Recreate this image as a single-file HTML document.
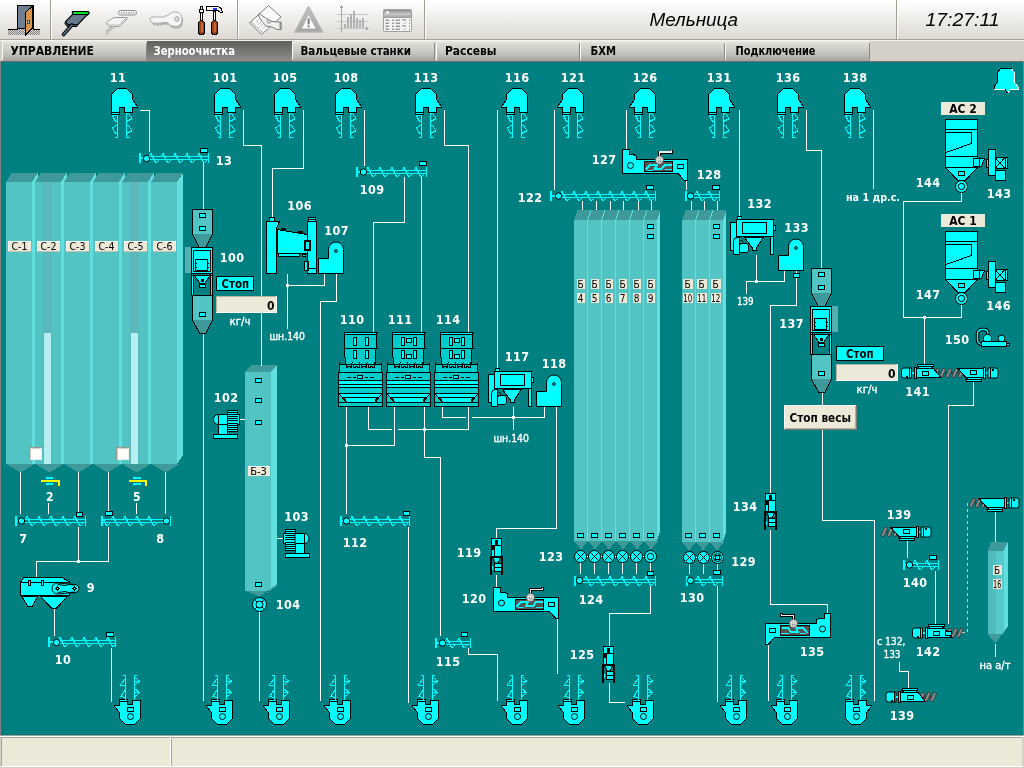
<!DOCTYPE html>
<html lang="ru"><head><meta charset="utf-8"><title>Мельница</title>
<style>
html,body{margin:0;padding:0;width:1024px;height:768px;overflow:hidden;background:#d4d0c8}
svg{display:block;position:absolute;left:0;top:0;will-change:transform}
text{white-space:pre}
</style></head><body>
<svg width="1024" height="768" viewBox="0 0 1024 768">
<defs>
<linearGradient id="gTool" x1="0" y1="0" x2="0" y2="1"><stop offset="0" stop-color="#ffffff"/><stop offset="0.5" stop-color="#eeece8"/><stop offset="1" stop-color="#dcd9d3"/></linearGradient>
<linearGradient id="gTab" x1="0" y1="0" x2="0" y2="1"><stop offset="0" stop-color="#ebeae3"/><stop offset="0.15" stop-color="#dbdad3"/><stop offset="0.6" stop-color="#c6c5bf"/><stop offset="1" stop-color="#a4a3a0"/></linearGradient>
<linearGradient id="gTabA" x1="0" y1="0" x2="0" y2="1"><stop offset="0" stop-color="#62605c"/><stop offset="1" stop-color="#8e8e8c"/></linearGradient>
<linearGradient id="gWarn" x1="0" y1="0" x2="0" y2="1"><stop offset="0" stop-color="#c4c4c4"/><stop offset="1" stop-color="#a4a4a4"/></linearGradient>
<linearGradient id="gTbl" x1="0" y1="0" x2="0" y2="1"><stop offset="0" stop-color="#909090"/><stop offset="0.5" stop-color="#c8c8c8"/><stop offset="1" stop-color="#9a9a9a"/></linearGradient>
<pattern id="dots" width="2" height="2" patternUnits="userSpaceOnUse"><rect width="2" height="2" fill="#d8d8d8"/><rect width="1" height="1" fill="#808080"/><rect x="1" y="1" width="1" height="1" fill="#808080"/></pattern>
<pattern id="ball" width="2" height="2" patternUnits="userSpaceOnUse"><rect width="2" height="2" fill="#b0b0b0"/><rect width="1" height="1" fill="#ffffff"/><rect x="1" y="1" width="1" height="1" fill="#787878"/></pattern>
</defs>
<g shape-rendering="crispEdges">
<rect x="0" y="0" width="1024" height="40" fill="url(#gTool)" stroke="none" stroke-width="1" />
<rect x="0" y="39" width="1024" height="1" fill="#a8a49c" stroke="none" stroke-width="1" />
<rect x="0" y="40" width="1024" height="1" fill="#f4f3ee" stroke="none" stroke-width="1" />
<rect x="50" y="0" width="1" height="39" fill="#a09c94" stroke="none" stroke-width="1" />
<rect x="51" y="0" width="1" height="39" fill="#ffffff" stroke="none" stroke-width="1" />
<rect x="237" y="0" width="1" height="39" fill="#a09c94" stroke="none" stroke-width="1" />
<rect x="238" y="0" width="1" height="39" fill="#ffffff" stroke="none" stroke-width="1" />
<rect x="424" y="0" width="1" height="39" fill="#a09c94" stroke="none" stroke-width="1" />
<rect x="425" y="0" width="1" height="39" fill="#ffffff" stroke="none" stroke-width="1" />
<rect x="896" y="0" width="1" height="39" fill="#a09c94" stroke="none" stroke-width="1" />
<rect x="897" y="0" width="1" height="39" fill="#ffffff" stroke="none" stroke-width="1" />
<rect x="0" y="41" width="1024" height="20" fill="#d4d0c8" stroke="none" stroke-width="1" />
<rect x="2" y="41" width="145" height="20" fill="url(#gTab)" stroke="none" stroke-width="1" />
<rect x="2" y="42" width="1" height="18" fill="#f8f8f4" stroke="none" stroke-width="1" />
<rect x="146" y="43" width="1" height="17" fill="#8a8884" stroke="none" stroke-width="1" />
<rect x="147" y="41" width="145" height="20" fill="url(#gTabA)" stroke="none" stroke-width="1" />
<rect x="292" y="41" width="143" height="20" fill="url(#gTab)" stroke="none" stroke-width="1" />
<rect x="292" y="42" width="1" height="18" fill="#f8f8f4" stroke="none" stroke-width="1" />
<rect x="434" y="43" width="1" height="17" fill="#8a8884" stroke="none" stroke-width="1" />
<rect x="436" y="41" width="144" height="20" fill="url(#gTab)" stroke="none" stroke-width="1" />
<rect x="436" y="42" width="1" height="18" fill="#f8f8f4" stroke="none" stroke-width="1" />
<rect x="579" y="43" width="1" height="17" fill="#8a8884" stroke="none" stroke-width="1" />
<rect x="580" y="41" width="145" height="20" fill="url(#gTab)" stroke="none" stroke-width="1" />
<rect x="580" y="42" width="1" height="18" fill="#f8f8f4" stroke="none" stroke-width="1" />
<rect x="724" y="43" width="1" height="17" fill="#8a8884" stroke="none" stroke-width="1" />
<rect x="725" y="41" width="145" height="20" fill="url(#gTab)" stroke="none" stroke-width="1" />
<rect x="725" y="42" width="1" height="18" fill="#f8f8f4" stroke="none" stroke-width="1" />
<rect x="869" y="43" width="1" height="17" fill="#8a8884" stroke="none" stroke-width="1" />
<rect x="0" y="61" width="1024" height="1" fill="#7a7270" stroke="none" stroke-width="1" />
<rect x="0" y="61" width="1024" height="675" fill="#808080" stroke="none" stroke-width="1" />
<rect x="1" y="62" width="1022" height="673" fill="#008080" stroke="none" stroke-width="1" />
<rect x="1" y="61" width="1022" height="1" fill="#75696a" stroke="none" stroke-width="1" />
<rect x="0" y="735" width="1024" height="33" fill="#d4d0c8" stroke="none" stroke-width="1" />
<rect x="0" y="735" width="1024" height="1" fill="#a0a09a" stroke="none" stroke-width="1" />
<rect x="0" y="736" width="1024" height="1" fill="#ffffff" stroke="none" stroke-width="1" />
<rect x="2" y="738" width="168" height="28" fill="#ece9d8" stroke="none" stroke-width="1" />
<rect x="172" y="738" width="850" height="28" fill="#ece9d8" stroke="none" stroke-width="1" />
<rect x="2" y="737" width="168" height="1" fill="#a8a498" stroke="none" stroke-width="1" />
<rect x="172" y="737" width="850" height="1" fill="#a8a498" stroke="none" stroke-width="1" />
<rect x="1" y="737" width="1" height="29" fill="#a8a498" stroke="none" stroke-width="1" />
<rect x="171" y="737" width="1" height="29" fill="#a8a498" stroke="none" stroke-width="1" />
<rect x="170" y="737" width="1" height="29" fill="#ffffff" stroke="none" stroke-width="1" />
<rect x="1" y="766" width="1022" height="1" fill="#ffffff" stroke="none" stroke-width="1" />
</g>
<text x="10.5" y="55" font-family="DejaVu Sans Condensed, DejaVu Sans, Liberation Sans, sans-serif" font-size="12" fill="#000" font-weight="bold" text-anchor="start" textLength="83.5" lengthAdjust="spacingAndGlyphs" >УПРАВЛЕНИЕ</text>
<text x="153.5" y="55" font-family="DejaVu Sans Condensed, DejaVu Sans, Liberation Sans, sans-serif" font-size="12" fill="#fff" font-weight="bold" text-anchor="start" textLength="81.5" lengthAdjust="spacingAndGlyphs" >Зерноочистка</text>
<text x="300.5" y="55" font-family="DejaVu Sans Condensed, DejaVu Sans, Liberation Sans, sans-serif" font-size="12" fill="#000" font-weight="bold" text-anchor="start" textLength="110.5" lengthAdjust="spacingAndGlyphs" >Вальцевые станки</text>
<text x="445" y="55" font-family="DejaVu Sans Condensed, DejaVu Sans, Liberation Sans, sans-serif" font-size="12" fill="#000" font-weight="bold" text-anchor="start" textLength="51.5" lengthAdjust="spacingAndGlyphs" >Рассевы</text>
<text x="590.5" y="55" font-family="DejaVu Sans Condensed, DejaVu Sans, Liberation Sans, sans-serif" font-size="12" fill="#000" font-weight="bold" text-anchor="start" textLength="25.5" lengthAdjust="spacingAndGlyphs" >БХМ</text>
<text x="735.5" y="55" font-family="DejaVu Sans Condensed, DejaVu Sans, Liberation Sans, sans-serif" font-size="12" fill="#000" font-weight="bold" text-anchor="start" textLength="80" lengthAdjust="spacingAndGlyphs" >Подключение</text>
<text x="649.5" y="26" font-family="Liberation Sans, Arial, sans-serif" font-size="17.5" fill="#000" font-style="italic" text-anchor="start" textLength="88.5" lengthAdjust="spacingAndGlyphs" >Мельница</text>
<text x="925.5" y="26" font-family="Liberation Sans, Arial, sans-serif" font-size="17.5" fill="#000" font-style="italic" text-anchor="start" textLength="74" lengthAdjust="spacingAndGlyphs" >17:27:11</text>
<g shape-rendering="crispEdges">
<rect x="8" y="29" width="32" height="6" fill="url(#dots)" stroke="none" stroke-width="1" />
<polygon points="17.5,28.5 17.5,5.5 33,5.5 33,28.5" fill="#708090" stroke="#000" stroke-width="1" />
<rect x="17" y="28" width="16" height="1" fill="#000" stroke="none" stroke-width="1" />
<polygon points="25.5,12.5 32.5,6 32.5,28 25.5,35" fill="#d8924a" stroke="#000" stroke-width="1" />
<rect x="27" y="20" width="2" height="3.5" fill="#9fd8e8" stroke="#000" stroke-width="0.6" />
<rect x="8" y="28.5" width="9.5" height="1" fill="#000" stroke="none" stroke-width="1" />
<rect x="33" y="28.5" width="7" height="1" fill="#000" stroke="none" stroke-width="1" />
</g><g shape-rendering="geometricPrecision">
<path d="M72.5 11.5H87Q89.5 11.5 89 13.5L87.5 15H72.5Z" fill="#00e428" stroke="#000" stroke-width="1.2"/>
<path d="M72.5 14.5H87.5L78 24.5H67.5L65.5 21.5Z" fill="#66788e" stroke="#000" stroke-width="1.1"/>
<path d="M65.5 21.5L67.5 24.5H78L77 26.5H67L65 23.5Z" fill="#4c5c70" stroke="#000" stroke-width="1"/>
<path d="M72 25L63.5 34.5" stroke="#000" stroke-width="3.6" stroke-linecap="round" fill="none"/>
<path d="M72 25L63.5 34.5" stroke="#66788e" stroke-width="1.6" stroke-linecap="round" fill="none"/>
<rect x="118.5" y="10.5" width="18" height="4.5" rx="2" fill="#f6f6f6" stroke="#8c8c8c" stroke-width="1"/>
<path d="M121 12.8H135" stroke="#808080" stroke-width="1.2" stroke-dasharray="1.2 1.2" fill="none"/>
<path d="M114 17.5H126.5Q128 17.5 127 19L119.5 26.5H109L106.5 24Q106 22.5 107.5 21.5Z" fill="#f4f4f2" stroke="#9c9c9c" stroke-width="1"/>
<path d="M108 23L110 25H119L126 18.5" stroke="#b8b8b8" stroke-width="1" fill="none"/>
<path d="M113.5 26.5L107.5 31L106.5 34.5" stroke="#9c9c9c" stroke-width="2.6" fill="none"/>
<path d="M113.5 26.5L107.5 31L106.5 34.5" stroke="#f4f4f2" stroke-width="1" fill="none"/>
<path d="M150 20Q149 17 152 17L164.5 17L165.5 15.5L167.5 16Q170.5 11.5 176 12Q182.5 13 182 19.5Q181.5 26.5 175 26.5Q170 26.5 167.5 22.5L161 22.5L160 24L158.5 22.5L156.5 24L155 22.5L153 23.5Z" fill="#b4b4b4" transform="translate(1.2,2.2)"/>
<path d="M150 20Q149 17 152 17L164.5 17L165.5 15.5L167.5 16Q170.5 11.5 176 12Q182.5 13 182 19.5Q181.5 26.5 175 26.5Q170 26.5 167.5 22.5L161 22.5L160 24L158.5 22.5L156.5 24L155 22.5L153 23.5Z" fill="#f6f6f6" stroke="#a8a8a8" stroke-width="0.9"/>
<circle cx="177" cy="19" r="2.3" fill="#dcdcdc" stroke="#9c9c9c" stroke-width="0.9"/>
</g>
<g shape-rendering="crispEdges">
<rect x="200.5" y="6" width="2" height="16" fill="#f0f0f0" stroke="#000" stroke-width="1" />
<rect x="199.5" y="9" width="4" height="3" fill="#f0f0f0" stroke="#000" stroke-width="1" />
<rect x="198.5" y="20.5" width="6" height="14" fill="#984216" stroke="#000" stroke-width="1" rx="3"/>
<rect x="200.5" y="23" width="2" height="9" fill="#c4683a" stroke="none" stroke-width="1" />
<rect x="213.5" y="11" width="2" height="12" fill="#f0f0f0" stroke="#000" stroke-width="1" />
<polygon points="206.5,7 208,6 218,6 221.5,9 222.5,12.5 220.5,12.5 218,10.5 208,10.5 206.5,10.5" fill="#f4f4f4" stroke="#000" stroke-width="1" />
<rect x="213" y="8" width="4" height="1.5" fill="#2030ff" stroke="none" stroke-width="1" />
<rect x="211.5" y="20.5" width="6" height="14" fill="#984216" stroke="#000" stroke-width="1" rx="3"/>
<rect x="213.5" y="23" width="2" height="9" fill="#c4683a" stroke="none" stroke-width="1" />
</g>
<g>
<polygon points="249.5,23 268.5,5.5 281,17 261.5,34.5" fill="#fafafa" stroke="#707070" stroke-width="0.9" />
<polyline points="251,22 263,33" fill="none" stroke="#909090" stroke-width="1.6" stroke-dasharray="1 1"/>
<polyline points="256,22 259,19.5" fill="none" stroke="#a0a0a0" stroke-width="0.8" />
<polyline points="258.2,24.2 261.2,21.7" fill="none" stroke="#a0a0a0" stroke-width="0.8" />
<polyline points="260.4,26.4 263.4,23.9" fill="none" stroke="#a0a0a0" stroke-width="0.8" />
<polyline points="262.6,28.6 265.6,26.1" fill="none" stroke="#a0a0a0" stroke-width="0.8" />
<polygon points="259,13.5 270,21 277,22 281,22 281,29.5 277,29.5 272,27 266,26 262,21.5 258.5,16" fill="#f0f0f0" stroke="#707070" stroke-width="0.9" />
<rect x="279.5" y="22" width="2" height="7.5" fill="#909090" stroke="none" stroke-width="1" />
<circle cx="269" cy="21.5" r="1.6" fill="#ffffff" stroke="#606060" stroke-width="0.8"  shape-rendering="geometricPrecision"/>
<polygon points="308.5,7 322.5,32 295,32" fill="url(#gWarn)" stroke="#b4b4b4" stroke-width="1.6" stroke-linejoin="round"/>
<polygon points="308.5,15.5 315.5,28.5 302,28.5" fill="#ffffff" stroke="none" stroke-width="1" />
<rect x="307.6" y="18.5" width="2" height="6" fill="#7a7a7a" stroke="none" stroke-width="1" />
<rect x="307.6" y="25.6" width="2" height="1.8" fill="#7a7a7a" stroke="none" stroke-width="1" />
<polyline points="337,14.5 368,14.5" fill="none" stroke="#c8c8c8" stroke-width="1" />
<polyline points="337,21.5 368,21.5" fill="none" stroke="#c8c8c8" stroke-width="1" />
<polyline points="337,28.5 368,28.5" fill="none" stroke="#c8c8c8" stroke-width="1" />
<polyline points="341.5,5.5 341.5,32.5" fill="none" stroke="#a8a8a8" stroke-width="1" />
<polygon points="339.8,8 341.5,5 343.2,8" fill="#9a9a9a" stroke="none" stroke-width="1" />
<polygon points="366,26.8 369,28.5 366,30.2" fill="#9a9a9a" stroke="none" stroke-width="1" />
<rect x="344" y="24" width="2" height="4" fill="#b2b2b2" stroke="none" stroke-width="1" />
<rect x="347" y="17" width="2" height="11" fill="#b2b2b2" stroke="none" stroke-width="1" />
<rect x="350" y="14" width="2" height="14" fill="#b2b2b2" stroke="none" stroke-width="1" />
<rect x="353" y="11" width="2" height="17" fill="#b2b2b2" stroke="none" stroke-width="1" />
<rect x="356" y="18" width="2" height="10" fill="#b2b2b2" stroke="none" stroke-width="1" />
<rect x="359" y="20" width="2" height="8" fill="#b2b2b2" stroke="none" stroke-width="1" />
<rect x="362" y="18" width="2" height="10" fill="#b2b2b2" stroke="none" stroke-width="1" />
<rect x="344" y="30" width="20" height="2.5" fill="#e4e4e4" stroke="none" stroke-width="1" />
<rect x="383.5" y="9.5" width="28" height="22" fill="#f4f4f4" stroke="#a0a0a0" stroke-width="1" rx="1"/>
<rect x="384" y="10" width="27" height="8" fill="url(#gTbl)" stroke="none" stroke-width="1" />
<circle cx="387.5" cy="12.5" r="1.4" fill="#ffffff" stroke="none" stroke-width="1"  shape-rendering="geometricPrecision"/>
<polyline points="385.5,20.2 389,20.2" fill="none" stroke="#707070" stroke-width="1" />
<polyline points="392,20.2 394,20.2" fill="none" stroke="#707070" stroke-width="1" />
<polyline points="395.5,20.2 400,20.2" fill="none" stroke="#707070" stroke-width="1" />
<polyline points="404.5,20.2 405.5,20.2" fill="none" stroke="#707070" stroke-width="1" />
<polyline points="409,20.2 410,20.2" fill="none" stroke="#707070" stroke-width="1" />
<polyline points="385.5,23.2 389,23.2" fill="none" stroke="#707070" stroke-width="1" />
<polyline points="392,23.2 394,23.2" fill="none" stroke="#707070" stroke-width="1" />
<polyline points="395.5,23.2 400,23.2" fill="none" stroke="#707070" stroke-width="1" />
<polyline points="404.5,23.2 405.5,23.2" fill="none" stroke="#707070" stroke-width="1" />
<polyline points="409,23.2 410,23.2" fill="none" stroke="#707070" stroke-width="1" />
<polyline points="385.5,26.2 389,26.2" fill="none" stroke="#707070" stroke-width="1" />
<polyline points="392,26.2 394,26.2" fill="none" stroke="#707070" stroke-width="1" />
<polyline points="395.5,26.2 400,26.2" fill="none" stroke="#707070" stroke-width="1" />
<polyline points="404.5,26.2 405.5,26.2" fill="none" stroke="#707070" stroke-width="1" />
<polyline points="409,26.2 410,26.2" fill="none" stroke="#707070" stroke-width="1" />
<polyline points="385.5,29.2 389,29.2" fill="none" stroke="#707070" stroke-width="1" />
<polyline points="392,29.2 394,29.2" fill="none" stroke="#707070" stroke-width="1" />
<polyline points="395.5,29.2 400,29.2" fill="none" stroke="#707070" stroke-width="1" />
<polyline points="404.5,29.2 405.5,29.2" fill="none" stroke="#707070" stroke-width="1" />
<polyline points="409,29.2 410,29.2" fill="none" stroke="#707070" stroke-width="1" />
<rect x="402" y="19" width="4" height="1.6" fill="#b0b0b0" stroke="none" stroke-width="1" />
<rect x="402" y="25" width="4" height="1.6" fill="#b0b0b0" stroke="none" stroke-width="1" />
</g>
<g shape-rendering="crispEdges">
<polygon points="32,182 37.5,173 37.5,455 32,464" fill="#62e0e0"/>
<polygon points="6,182 11.5,173 37.5,173 32,182" fill="#3e9a9a"/>
<polygon points="61,182 66.5,173 66.5,455 61,464" fill="#62e0e0"/>
<polygon points="35,182 40.5,173 66.5,173 61,182" fill="#3e9a9a"/>
<polygon points="90,182 95.5,173 95.5,455 90,464" fill="#62e0e0"/>
<polygon points="64,182 69.5,173 95.5,173 90,182" fill="#3e9a9a"/>
<polygon points="119,182 124.5,173 124.5,455 119,464" fill="#62e0e0"/>
<polygon points="93,182 98.5,173 124.5,173 119,182" fill="#3e9a9a"/>
<polygon points="148,182 153.5,173 153.5,455 148,464" fill="#62e0e0"/>
<polygon points="122,182 127.5,173 153.5,173 148,182" fill="#3e9a9a"/>
<polygon points="177,182 183,173 183,455 177,464" fill="#62e0e0"/>
<polygon points="151,182 156.5,173 182.5,173 177,182" fill="#3e9a9a"/>
<rect x="6" y="182" width="26" height="282" fill="#52c4c4"/>
<rect x="32" y="182" width="3" height="282" fill="#62e0e0"/>
<polygon points="6,464 35,464 20.5,472.5" fill="#3e9a9a"/>
<rect x="35" y="182" width="26" height="282" fill="#52c4c4"/>
<rect x="61" y="182" width="3" height="282" fill="#62e0e0"/>
<polygon points="35,464 64,464 49.5,472.5" fill="#3e9a9a"/>
<rect x="64" y="182" width="26" height="282" fill="#52c4c4"/>
<rect x="90" y="182" width="3" height="282" fill="#62e0e0"/>
<polygon points="64,464 93,464 78.5,472.5" fill="#3e9a9a"/>
<rect x="93" y="182" width="26" height="282" fill="#52c4c4"/>
<rect x="119" y="182" width="3" height="282" fill="#62e0e0"/>
<polygon points="93,464 122,464 107.5,472.5" fill="#3e9a9a"/>
<rect x="122" y="182" width="26" height="282" fill="#52c4c4"/>
<rect x="148" y="182" width="3" height="282" fill="#62e0e0"/>
<polygon points="122,464 151,464 136.5,472.5" fill="#3e9a9a"/>
<rect x="151" y="182" width="26" height="282" fill="#52c4c4"/>
<polygon points="151,464 180,464 165.5,472.5" fill="#3e9a9a"/>
<rect x="43" y="182" width="9" height="282" fill="#5cb8ba" stroke="none" stroke-width="1" />
<rect x="44" y="333" width="7" height="131" fill="#b6eef2" stroke="none" stroke-width="1" />
<rect x="130" y="182" width="9" height="282" fill="#5cb8ba" stroke="none" stroke-width="1" />
<rect x="131" y="333" width="7" height="131" fill="#b6eef2" stroke="none" stroke-width="1" />
<rect x="29" y="447" width="13" height="13" fill="#ffffff" stroke="none" stroke-width="1" />
<rect x="29" y="447" width="13" height="1" fill="#9c9888" stroke="none" stroke-width="1" />
<rect x="29" y="447" width="1" height="13" fill="#9c9888" stroke="none" stroke-width="1" />
<rect x="30" y="448" width="11" height="1" fill="#d4d0c4" stroke="none" stroke-width="1" />
<rect x="30" y="448" width="1" height="11" fill="#d4d0c4" stroke="none" stroke-width="1" />
<rect x="41" y="448" width="1" height="12" fill="#f4f2e8" stroke="none" stroke-width="1" />
<rect x="30" y="459" width="12" height="1" fill="#f4f2e8" stroke="none" stroke-width="1" />
<rect x="116" y="447" width="13" height="13" fill="#ffffff" stroke="none" stroke-width="1" />
<rect x="116" y="447" width="13" height="1" fill="#9c9888" stroke="none" stroke-width="1" />
<rect x="116" y="447" width="1" height="13" fill="#9c9888" stroke="none" stroke-width="1" />
<rect x="117" y="448" width="11" height="1" fill="#d4d0c4" stroke="none" stroke-width="1" />
<rect x="117" y="448" width="1" height="11" fill="#d4d0c4" stroke="none" stroke-width="1" />
<rect x="128" y="448" width="1" height="12" fill="#f4f2e8" stroke="none" stroke-width="1" />
<rect x="117" y="459" width="12" height="1" fill="#f4f2e8" stroke="none" stroke-width="1" />
<rect x="8" y="241" width="23" height="10.5" fill="#ece9d8" stroke="none" stroke-width="1" />
<rect x="8" y="241" width="23" height="1" fill="#ffffff" stroke="none" stroke-width="1" />
<rect x="8" y="241" width="1" height="10.5" fill="#ffffff" stroke="none" stroke-width="1" />
<rect x="8" y="251" width="23" height="0.5" fill="#c4c0b0" stroke="none" stroke-width="1" />
<rect x="30.5" y="241" width="0.5" height="10.5" fill="#c4c0b0" stroke="none" stroke-width="1" />
<rect x="37" y="241" width="23" height="10.5" fill="#ece9d8" stroke="none" stroke-width="1" />
<rect x="37" y="241" width="23" height="1" fill="#ffffff" stroke="none" stroke-width="1" />
<rect x="37" y="241" width="1" height="10.5" fill="#ffffff" stroke="none" stroke-width="1" />
<rect x="37" y="251" width="23" height="0.5" fill="#c4c0b0" stroke="none" stroke-width="1" />
<rect x="59.5" y="241" width="0.5" height="10.5" fill="#c4c0b0" stroke="none" stroke-width="1" />
<rect x="66" y="241" width="23" height="10.5" fill="#ece9d8" stroke="none" stroke-width="1" />
<rect x="66" y="241" width="23" height="1" fill="#ffffff" stroke="none" stroke-width="1" />
<rect x="66" y="241" width="1" height="10.5" fill="#ffffff" stroke="none" stroke-width="1" />
<rect x="66" y="251" width="23" height="0.5" fill="#c4c0b0" stroke="none" stroke-width="1" />
<rect x="88.5" y="241" width="0.5" height="10.5" fill="#c4c0b0" stroke="none" stroke-width="1" />
<rect x="95" y="241" width="23" height="10.5" fill="#ece9d8" stroke="none" stroke-width="1" />
<rect x="95" y="241" width="23" height="1" fill="#ffffff" stroke="none" stroke-width="1" />
<rect x="95" y="241" width="1" height="10.5" fill="#ffffff" stroke="none" stroke-width="1" />
<rect x="95" y="251" width="23" height="0.5" fill="#c4c0b0" stroke="none" stroke-width="1" />
<rect x="117.5" y="241" width="0.5" height="10.5" fill="#c4c0b0" stroke="none" stroke-width="1" />
<rect x="124" y="241" width="23" height="10.5" fill="#ece9d8" stroke="none" stroke-width="1" />
<rect x="124" y="241" width="23" height="1" fill="#ffffff" stroke="none" stroke-width="1" />
<rect x="124" y="241" width="1" height="10.5" fill="#ffffff" stroke="none" stroke-width="1" />
<rect x="124" y="251" width="23" height="0.5" fill="#c4c0b0" stroke="none" stroke-width="1" />
<rect x="146.5" y="241" width="0.5" height="10.5" fill="#c4c0b0" stroke="none" stroke-width="1" />
<rect x="153" y="241" width="23" height="10.5" fill="#ece9d8" stroke="none" stroke-width="1" />
<rect x="153" y="241" width="23" height="1" fill="#ffffff" stroke="none" stroke-width="1" />
<rect x="153" y="241" width="1" height="10.5" fill="#ffffff" stroke="none" stroke-width="1" />
<rect x="153" y="251" width="23" height="0.5" fill="#c4c0b0" stroke="none" stroke-width="1" />
<rect x="175.5" y="241" width="0.5" height="10.5" fill="#c4c0b0" stroke="none" stroke-width="1" />
<polygon points="587,220 590.5,210 590.5,531 587,541" fill="#62e0e0"/>
<polygon points="574,220 577.5,210 590.5,210 587,220" fill="#3e9a9a"/>
<polygon points="601,220 604.5,210 604.5,531 601,541" fill="#62e0e0"/>
<polygon points="588,220 591.5,210 604.5,210 601,220" fill="#3e9a9a"/>
<polygon points="615,220 618.5,210 618.5,531 615,541" fill="#62e0e0"/>
<polygon points="602,220 605.5,210 618.5,210 615,220" fill="#3e9a9a"/>
<polygon points="629,220 632.5,210 632.5,531 629,541" fill="#62e0e0"/>
<polygon points="616,220 619.5,210 632.5,210 629,220" fill="#3e9a9a"/>
<polygon points="643,220 646.5,210 646.5,531 643,541" fill="#62e0e0"/>
<polygon points="630,220 633.5,210 646.5,210 643,220" fill="#3e9a9a"/>
<polygon points="657,220 660,210 660,531 657,541" fill="#62e0e0"/>
<polygon points="644,220 647.5,210 660.5,210 657,220" fill="#3e9a9a"/>
<rect x="574" y="220" width="13" height="321" fill="#52c4c4"/>
<rect x="587" y="220" width="1" height="321" fill="#62e0e0"/>
<polygon points="574,541 588,541 581,549.5" fill="#3e9a9a"/>
<rect x="588" y="220" width="13" height="321" fill="#52c4c4"/>
<rect x="601" y="220" width="1" height="321" fill="#62e0e0"/>
<polygon points="588,541 602,541 595,549.5" fill="#3e9a9a"/>
<rect x="602" y="220" width="13" height="321" fill="#52c4c4"/>
<rect x="615" y="220" width="1" height="321" fill="#62e0e0"/>
<polygon points="602,541 616,541 609,549.5" fill="#3e9a9a"/>
<rect x="616" y="220" width="13" height="321" fill="#52c4c4"/>
<rect x="629" y="220" width="1" height="321" fill="#62e0e0"/>
<polygon points="616,541 630,541 623,549.5" fill="#3e9a9a"/>
<rect x="630" y="220" width="13" height="321" fill="#52c4c4"/>
<rect x="643" y="220" width="1" height="321" fill="#62e0e0"/>
<polygon points="630,541 644,541 637,549.5" fill="#3e9a9a"/>
<rect x="644" y="220" width="13" height="321" fill="#52c4c4"/>
<polygon points="644,541 658,541 651,549.5" fill="#3e9a9a"/>
<polygon points="695,220 698.5,210 698.5,532 695,542" fill="#62e0e0"/>
<polygon points="682,220 685.5,210 698.5,210 695,220" fill="#3e9a9a"/>
<polygon points="709,220 712.5,210 712.5,532 709,542" fill="#62e0e0"/>
<polygon points="696,220 699.5,210 712.5,210 709,220" fill="#3e9a9a"/>
<polygon points="723,220 726,210 726,532 723,542" fill="#62e0e0"/>
<polygon points="710,220 713.5,210 726.5,210 723,220" fill="#3e9a9a"/>
<rect x="682" y="220" width="13" height="322" fill="#52c4c4"/>
<rect x="695" y="220" width="1" height="322" fill="#62e0e0"/>
<polygon points="682,542 696,542 689,550.5" fill="#3e9a9a"/>
<rect x="696" y="220" width="13" height="322" fill="#52c4c4"/>
<rect x="709" y="220" width="1" height="322" fill="#62e0e0"/>
<polygon points="696,542 710,542 703,550.5" fill="#3e9a9a"/>
<rect x="710" y="220" width="13" height="322" fill="#52c4c4"/>
<polygon points="710,542 724,542 717,550.5" fill="#3e9a9a"/>
<rect x="576.5" y="278.5" width="8" height="10" fill="#ece9d8" stroke="none" stroke-width="1" />
<rect x="576.5" y="292.5" width="8" height="10" fill="#ece9d8" stroke="none" stroke-width="1" />
<rect x="577.5" y="533.5" width="6" height="4" fill="#00ffff" stroke="#000" stroke-width="1" />
<rect x="590.5" y="278.5" width="8" height="10" fill="#ece9d8" stroke="none" stroke-width="1" />
<rect x="590.5" y="292.5" width="8" height="10" fill="#ece9d8" stroke="none" stroke-width="1" />
<rect x="591.5" y="533.5" width="6" height="4" fill="#00ffff" stroke="#000" stroke-width="1" />
<rect x="604.5" y="278.5" width="8" height="10" fill="#ece9d8" stroke="none" stroke-width="1" />
<rect x="604.5" y="292.5" width="8" height="10" fill="#ece9d8" stroke="none" stroke-width="1" />
<rect x="605.5" y="533.5" width="6" height="4" fill="#00ffff" stroke="#000" stroke-width="1" />
<rect x="618.5" y="278.5" width="8" height="10" fill="#ece9d8" stroke="none" stroke-width="1" />
<rect x="618.5" y="292.5" width="8" height="10" fill="#ece9d8" stroke="none" stroke-width="1" />
<rect x="619.5" y="533.5" width="6" height="4" fill="#00ffff" stroke="#000" stroke-width="1" />
<rect x="632.5" y="278.5" width="8" height="10" fill="#ece9d8" stroke="none" stroke-width="1" />
<rect x="632.5" y="292.5" width="8" height="10" fill="#ece9d8" stroke="none" stroke-width="1" />
<rect x="633.5" y="533.5" width="6" height="4" fill="#00ffff" stroke="#000" stroke-width="1" />
<rect x="646.5" y="278.5" width="8" height="10" fill="#ece9d8" stroke="none" stroke-width="1" />
<rect x="646.5" y="292.5" width="8" height="10" fill="#ece9d8" stroke="none" stroke-width="1" />
<rect x="647.5" y="533.5" width="6" height="4" fill="#00ffff" stroke="#000" stroke-width="1" />
<rect x="683" y="278.5" width="9.5" height="10" fill="#ece9d8" stroke="none" stroke-width="1" />
<rect x="683" y="292.5" width="9.5" height="10" fill="#ece9d8" stroke="none" stroke-width="1" />
<rect x="685.5" y="533.5" width="6" height="4" fill="#00ffff" stroke="#000" stroke-width="1" />
<rect x="697" y="278.5" width="9.5" height="10" fill="#ece9d8" stroke="none" stroke-width="1" />
<rect x="697" y="292.5" width="9.5" height="10" fill="#ece9d8" stroke="none" stroke-width="1" />
<rect x="699.5" y="533.5" width="6" height="4" fill="#00ffff" stroke="#000" stroke-width="1" />
<rect x="711" y="278.5" width="9.5" height="10" fill="#ece9d8" stroke="none" stroke-width="1" />
<rect x="711" y="292.5" width="9.5" height="10" fill="#ece9d8" stroke="none" stroke-width="1" />
<rect x="713.5" y="533.5" width="6" height="4" fill="#00ffff" stroke="#000" stroke-width="1" />
<rect x="647.5" y="224.5" width="6" height="4" fill="#00ffff" stroke="#000" stroke-width="1" />
<rect x="647.5" y="234.5" width="6" height="4" fill="#00ffff" stroke="#000" stroke-width="1" />
<rect x="713.5" y="224.5" width="6" height="4" fill="#00ffff" stroke="#000" stroke-width="1" />
<rect x="713.5" y="234.5" width="6" height="4" fill="#00ffff" stroke="#000" stroke-width="1" />
<polygon points="271,372 277,365 277,584 271,590.5" fill="#62e0e0"/>
<polygon points="245,372 251.5,365 277,365 271,372" fill="#3e9a9a"/>
<rect x="245" y="372" width="26" height="218.5" fill="#52c4c4"/>
<polygon points="245,590.5 271,590.5 277,584 259.5,596.5" fill="#3e9a9a"/>
<polygon points="271,590.5 277,584 277,586 262,596" fill="#62e0e0" opacity="0.55"/>
<rect x="255.5" y="378.5" width="6" height="4" fill="#00ffff" stroke="#000" stroke-width="1" />
<rect x="255.5" y="398.5" width="6" height="4" fill="#00ffff" stroke="#000" stroke-width="1" />
<rect x="255.5" y="420.5" width="6" height="4" fill="#00ffff" stroke="#000" stroke-width="1" />
<rect x="255.5" y="582.5" width="6" height="4" fill="#00ffff" stroke="#000" stroke-width="1" />
<rect x="247.5" y="465.5" width="22" height="10.5" fill="#ece9d8" stroke="none" stroke-width="1" />
<rect x="247.5" y="465.5" width="22" height="1" fill="#ffffff" stroke="none" stroke-width="1" />
<polygon points="1003.5,551 1008,542 1008,626 1003.5,634" fill="#62e0e0"/>
<polygon points="987.5,551 991,542 1008,542 1003.5,551" fill="#3e9a9a"/>
<rect x="987.5" y="551" width="8.5" height="83" fill="#4ebcbc"/>
<rect x="996" y="551" width="7.5" height="83" fill="#56caca"/>
<polygon points="987.5,634 1003.5,634 1008,626 995.5,643.5" fill="#3e9a9a"/>
<rect x="992.5" y="564.5" width="9.5" height="10" fill="#ece9d8" stroke="none" stroke-width="1" />
<rect x="992.5" y="578.5" width="9.5" height="10" fill="#ece9d8" stroke="none" stroke-width="1" />
</g>
<text x="19.5" y="250" font-family="DejaVu Sans Condensed, DejaVu Sans, Liberation Sans, sans-serif" font-size="10.5" fill="#000" text-anchor="middle" >С-1</text>
<text x="48.5" y="250" font-family="DejaVu Sans Condensed, DejaVu Sans, Liberation Sans, sans-serif" font-size="10.5" fill="#000" text-anchor="middle" >С-2</text>
<text x="77.5" y="250" font-family="DejaVu Sans Condensed, DejaVu Sans, Liberation Sans, sans-serif" font-size="10.5" fill="#000" text-anchor="middle" >С-3</text>
<text x="106.5" y="250" font-family="DejaVu Sans Condensed, DejaVu Sans, Liberation Sans, sans-serif" font-size="10.5" fill="#000" text-anchor="middle" >С-4</text>
<text x="135.5" y="250" font-family="DejaVu Sans Condensed, DejaVu Sans, Liberation Sans, sans-serif" font-size="10.5" fill="#000" text-anchor="middle" >С-5</text>
<text x="164.5" y="250" font-family="DejaVu Sans Condensed, DejaVu Sans, Liberation Sans, sans-serif" font-size="10.5" fill="#000" text-anchor="middle" >С-6</text>
<text x="580.5" y="287.5" font-family="DejaVu Sans Condensed, DejaVu Sans, Liberation Sans, sans-serif" font-size="10" fill="#000" text-anchor="middle" >Б</text>
<text x="580.5" y="301.5" font-family="DejaVu Sans Condensed, DejaVu Sans, Liberation Sans, sans-serif" font-size="10" fill="#000" text-anchor="middle" >4</text>
<text x="594.5" y="287.5" font-family="DejaVu Sans Condensed, DejaVu Sans, Liberation Sans, sans-serif" font-size="10" fill="#000" text-anchor="middle" >Б</text>
<text x="594.5" y="301.5" font-family="DejaVu Sans Condensed, DejaVu Sans, Liberation Sans, sans-serif" font-size="10" fill="#000" text-anchor="middle" >5</text>
<text x="608.5" y="287.5" font-family="DejaVu Sans Condensed, DejaVu Sans, Liberation Sans, sans-serif" font-size="10" fill="#000" text-anchor="middle" >Б</text>
<text x="608.5" y="301.5" font-family="DejaVu Sans Condensed, DejaVu Sans, Liberation Sans, sans-serif" font-size="10" fill="#000" text-anchor="middle" >6</text>
<text x="622.5" y="287.5" font-family="DejaVu Sans Condensed, DejaVu Sans, Liberation Sans, sans-serif" font-size="10" fill="#000" text-anchor="middle" >Б</text>
<text x="622.5" y="301.5" font-family="DejaVu Sans Condensed, DejaVu Sans, Liberation Sans, sans-serif" font-size="10" fill="#000" text-anchor="middle" >7</text>
<text x="636.5" y="287.5" font-family="DejaVu Sans Condensed, DejaVu Sans, Liberation Sans, sans-serif" font-size="10" fill="#000" text-anchor="middle" >Б</text>
<text x="636.5" y="301.5" font-family="DejaVu Sans Condensed, DejaVu Sans, Liberation Sans, sans-serif" font-size="10" fill="#000" text-anchor="middle" >8</text>
<text x="650.5" y="287.5" font-family="DejaVu Sans Condensed, DejaVu Sans, Liberation Sans, sans-serif" font-size="10" fill="#000" text-anchor="middle" >Б</text>
<text x="650.5" y="301.5" font-family="DejaVu Sans Condensed, DejaVu Sans, Liberation Sans, sans-serif" font-size="10" fill="#000" text-anchor="middle" >9</text>
<text x="687.7" y="287.5" font-family="DejaVu Sans Condensed, DejaVu Sans, Liberation Sans, sans-serif" font-size="10" fill="#000" text-anchor="middle" >Б</text>
<text x="687.8" y="301.5" font-family="DejaVu Sans Condensed, DejaVu Sans, Liberation Sans, sans-serif" font-size="10" fill="#000" text-anchor="middle" textLength="9" lengthAdjust="spacingAndGlyphs" >10</text>
<text x="701.7" y="287.5" font-family="DejaVu Sans Condensed, DejaVu Sans, Liberation Sans, sans-serif" font-size="10" fill="#000" text-anchor="middle" >Б</text>
<text x="701.8" y="301.5" font-family="DejaVu Sans Condensed, DejaVu Sans, Liberation Sans, sans-serif" font-size="10" fill="#000" text-anchor="middle" textLength="9" lengthAdjust="spacingAndGlyphs" >11</text>
<text x="715.7" y="287.5" font-family="DejaVu Sans Condensed, DejaVu Sans, Liberation Sans, sans-serif" font-size="10" fill="#000" text-anchor="middle" >Б</text>
<text x="715.8" y="301.5" font-family="DejaVu Sans Condensed, DejaVu Sans, Liberation Sans, sans-serif" font-size="10" fill="#000" text-anchor="middle" textLength="9" lengthAdjust="spacingAndGlyphs" >12</text>
<text x="258.5" y="474.5" font-family="DejaVu Sans Condensed, DejaVu Sans, Liberation Sans, sans-serif" font-size="11" fill="#000" text-anchor="middle" >Б-3</text>
<text x="997.2" y="573.5" font-family="DejaVu Sans Condensed, DejaVu Sans, Liberation Sans, sans-serif" font-size="10" fill="#000" text-anchor="middle" >Б</text>
<text x="997.2" y="587.5" font-family="DejaVu Sans Condensed, DejaVu Sans, Liberation Sans, sans-serif" font-size="10" fill="#000" text-anchor="middle" textLength="8.5" lengthAdjust="spacingAndGlyphs" >16</text>
<g shape-rendering="crispEdges" fill="none" stroke="#ffffff" stroke-width="1">
<polyline points="140,110.5 149.5,110.5 149.5,152"/>
<polyline points="203.5,163 203.5,209"/>
<polyline points="243.5,110 243.5,145.5 261.5,145.5 261.5,366"/>
<polyline points="303.5,110 303.5,168.5 272.5,168.5 272.5,217"/>
<polyline points="364.5,110 364.5,166"/>
<polyline points="404.5,177 404.5,222.5 373.5,222.5 373.5,332"/>
<polyline points="421.5,177 421.5,332"/>
<polyline points="444.5,110 444.5,145.5 468.5,145.5 468.5,332"/>
<polyline points="497.5,110 497.5,368"/>
<polyline points="554.5,110 554.5,190"/>
<polyline points="626.5,110 626.5,149"/>
<polyline points="739.5,110 739.5,216"/>
<polyline points="806.5,110 806.5,150.5 821.5,150.5 821.5,268"/>
<polyline points="873.5,110 873.5,188.5"/>
<polyline points="203.5,333 203.5,701"/>
<polyline points="287.5,274 287.5,329"/>
<polyline points="287.5,285.5 324.5,285.5 324.5,274"/>
<polyline points="336.5,274 336.5,301.5 320.5,301.5 320.5,701"/>
<polyline points="259.5,611 259.5,701"/>
<polyline points="240,419.5 245,419.5"/>
<polyline points="277,538.5 283,538.5"/>
<polyline points="346.5,407 346.5,514"/>
<polyline points="346.5,445.5 394.5,445.5 394.5,407"/>
<polyline points="368.5,407 368.5,429.5 391.5,429.5"/>
<polyline points="397.5,429.5 468.5,429.5 468.5,407"/>
<polyline points="424.5,407 424.5,457.5 440.5,457.5 440.5,636"/>
<polyline points="442.5,407 442.5,417.5 465.5,417.5"/>
<polyline points="471.5,417.5 544.5,417.5 544.5,407"/>
<polyline points="513.5,407 513.5,430"/>
<polyline points="556.5,407 556.5,528.5 496.5,528.5 496.5,538"/>
<polyline points="496.5,575 496.5,587"/>
<polyline points="557.5,619 557.5,674"/>
<polyline points="408.5,527 408.5,703"/>
<polyline points="468.5,648 468.5,654.5 497.5,654.5 497.5,701"/>
<polyline points="20.5,472 20.5,514"/>
<polyline points="78.5,472 78.5,512"/>
<polyline points="108.5,472 108.5,511"/>
<polyline points="165.5,472 165.5,514"/>
<polyline points="48.5,503 48.5,514"/>
<polyline points="136.5,503 136.5,514"/>
<polyline points="78.5,527 78.5,561.5"/>
<polyline points="108.5,527 108.5,561.5 36.5,561.5 36.5,577"/>
<polyline points="54.5,608.5 54.5,636"/>
<polyline points="111.5,648 111.5,702"/>
<polyline points="686.5,181 686.5,190"/>
<polyline points="650.5,586 650.5,613.5 609.5,613.5 609.5,646"/>
<polyline points="609.5,683 609.5,702.5 625,702.5"/>
<polyline points="717.5,586 717.5,702"/>
<polyline points="756.5,255 756.5,281.5"/>
<polyline points="746.5,294 746.5,281.5 784.5,281.5 784.5,271"/>
<polyline points="796.5,278 796.5,305.5 770.5,305.5 770.5,493"/>
<polyline points="770.5,530 770.5,604.5 827.5,604.5 827.5,612.5"/>
<polyline points="768.5,644 768.5,701"/>
<polyline points="822.5,392 822.5,405"/>
<polyline points="822.5,429 822.5,520.5 874.5,520.5 874.5,701"/>
<polyline points="961.5,193 961.5,201.5 903.5,201.5 903.5,317.5 961.5,317.5 961.5,305"/>
<polyline points="924.5,317.5 924.5,364"/>
<polyline points="973.5,382 973.5,405.5 948.5,405.5 948.5,623.5"/>
<polyline points="907.5,541 907.5,558"/>
<polyline points="935.5,571 935.5,624"/>
<polyline points="995.5,512 995.5,541.5"/>
<polyline points="995.5,644 995.5,657"/>
<polyline points="899.5,662 899.5,671.5 908.5,671.5 908.5,688"/>
<polyline points="582.5,201 582.5,210"/>
<polyline points="596.5,201 596.5,210"/>
<polyline points="610.5,201 610.5,210"/>
<polyline points="623.5,201 623.5,210"/>
<polyline points="638.5,201 638.5,210"/>
<polyline points="651.5,201 651.5,210"/>
<polyline points="691.5,201 691.5,210"/>
<polyline points="704.5,201 704.5,210"/>
<polyline points="717.5,201 717.5,210"/>
<polyline points="580.5,563 580.5,574"/>
<polyline points="594.5,563 594.5,574"/>
<polyline points="608.5,563 608.5,574"/>
<polyline points="622.5,563 622.5,574"/>
<polyline points="636.5,563 636.5,574"/>
<polyline points="650.5,563 650.5,571"/>
<polyline points="689.5,564 689.5,574"/>
<polyline points="703.5,564 703.5,574"/>
<polyline points="717.5,564 717.5,570"/>
<polyline points="967.5,503 967.5,632.5 962,632.5" stroke="#cfc8c0" stroke-dasharray="3 3"/>
</g>
<g shape-rendering="crispEdges">
<rect x="286" y="284" width="3" height="3" fill="#fff" stroke="none" stroke-width="1" />
<rect x="345" y="444" width="3" height="3" fill="#fff" stroke="none" stroke-width="1" />
<rect x="423" y="428" width="3" height="3" fill="#fff" stroke="none" stroke-width="1" />
<rect x="512" y="416" width="3" height="3" fill="#fff" stroke="none" stroke-width="1" />
<rect x="77" y="560" width="3" height="3" fill="#fff" stroke="none" stroke-width="1" />
<rect x="755" y="280" width="3" height="3" fill="#fff" stroke="none" stroke-width="1" />
<rect x="923" y="316" width="3" height="3" fill="#fff" stroke="none" stroke-width="1" />
</g>
<g shape-rendering="crispEdges">
<polygon points="111.5,114.5 111.5,94.5 117.5,88.5 126.5,88.5 132.5,94.5 132.5,99.5 137.5,106.5 137.5,107.5 132.5,107.5 132.5,112.5 124.5,112.5 124.5,107.5 119.5,107.5 119.5,114.5" fill="#00ffff" stroke="#000" stroke-width="1" />
<polyline points="111.5,112.5 119.5,112.5" fill="none" stroke="#000" stroke-width="1" />
<polyline points="117.5,115 117.5,137.5 115,137.5" fill="none" stroke="#00ffff" stroke-width="1" />
<polyline points="126.5,112.5 126.5,137.5 129.5,137.5" fill="none" stroke="#00ffff" stroke-width="1" />
<polyline points="117.5,115.5 112.5,115.5 115.5,121.5 117.5,121.5" fill="none" stroke="#00ffff" stroke-width="1" />
<polyline points="117.5,124.5 112.5,128 115.5,133.5 117.5,133.5" fill="none" stroke="#00ffff" stroke-width="1" />
<polyline points="126.5,113.5 128.5,113.5 131.5,118 131.5,119 126.5,121.5" fill="none" stroke="#00ffff" stroke-width="1" />
<polyline points="126.5,125.5 128.5,125.5 131.5,130 131.5,131 126.5,133.5" fill="none" stroke="#00ffff" stroke-width="1" />
<polygon points="214.5,114.5 214.5,94.5 220.5,88.5 229.5,88.5 235.5,94.5 235.5,99.5 240.5,106.5 240.5,107.5 235.5,107.5 235.5,112.5 227.5,112.5 227.5,107.5 222.5,107.5 222.5,114.5" fill="#00ffff" stroke="#000" stroke-width="1" />
<polyline points="214.5,112.5 222.5,112.5" fill="none" stroke="#000" stroke-width="1" />
<polyline points="220.5,115 220.5,137.5 218,137.5" fill="none" stroke="#00ffff" stroke-width="1" />
<polyline points="229.5,112.5 229.5,137.5 232.5,137.5" fill="none" stroke="#00ffff" stroke-width="1" />
<polyline points="220.5,115.5 215.5,115.5 218.5,121.5 220.5,121.5" fill="none" stroke="#00ffff" stroke-width="1" />
<polyline points="220.5,124.5 215.5,128 218.5,133.5 220.5,133.5" fill="none" stroke="#00ffff" stroke-width="1" />
<polyline points="229.5,113.5 231.5,113.5 234.5,118 234.5,119 229.5,121.5" fill="none" stroke="#00ffff" stroke-width="1" />
<polyline points="229.5,125.5 231.5,125.5 234.5,130 234.5,131 229.5,133.5" fill="none" stroke="#00ffff" stroke-width="1" />
<polygon points="274.5,114.5 274.5,94.5 280.5,88.5 289.5,88.5 295.5,94.5 295.5,99.5 300.5,106.5 300.5,107.5 295.5,107.5 295.5,112.5 287.5,112.5 287.5,107.5 282.5,107.5 282.5,114.5" fill="#00ffff" stroke="#000" stroke-width="1" />
<polyline points="274.5,112.5 282.5,112.5" fill="none" stroke="#000" stroke-width="1" />
<polyline points="280.5,115 280.5,137.5 278,137.5" fill="none" stroke="#00ffff" stroke-width="1" />
<polyline points="289.5,112.5 289.5,137.5 292.5,137.5" fill="none" stroke="#00ffff" stroke-width="1" />
<polyline points="280.5,115.5 275.5,115.5 278.5,121.5 280.5,121.5" fill="none" stroke="#00ffff" stroke-width="1" />
<polyline points="280.5,124.5 275.5,128 278.5,133.5 280.5,133.5" fill="none" stroke="#00ffff" stroke-width="1" />
<polyline points="289.5,113.5 291.5,113.5 294.5,118 294.5,119 289.5,121.5" fill="none" stroke="#00ffff" stroke-width="1" />
<polyline points="289.5,125.5 291.5,125.5 294.5,130 294.5,131 289.5,133.5" fill="none" stroke="#00ffff" stroke-width="1" />
<polygon points="335.5,114.5 335.5,94.5 341.5,88.5 350.5,88.5 356.5,94.5 356.5,99.5 361.5,106.5 361.5,107.5 356.5,107.5 356.5,112.5 348.5,112.5 348.5,107.5 343.5,107.5 343.5,114.5" fill="#00ffff" stroke="#000" stroke-width="1" />
<polyline points="335.5,112.5 343.5,112.5" fill="none" stroke="#000" stroke-width="1" />
<polyline points="341.5,115 341.5,137.5 339,137.5" fill="none" stroke="#00ffff" stroke-width="1" />
<polyline points="350.5,112.5 350.5,137.5 353.5,137.5" fill="none" stroke="#00ffff" stroke-width="1" />
<polyline points="341.5,115.5 336.5,115.5 339.5,121.5 341.5,121.5" fill="none" stroke="#00ffff" stroke-width="1" />
<polyline points="341.5,124.5 336.5,128 339.5,133.5 341.5,133.5" fill="none" stroke="#00ffff" stroke-width="1" />
<polyline points="350.5,113.5 352.5,113.5 355.5,118 355.5,119 350.5,121.5" fill="none" stroke="#00ffff" stroke-width="1" />
<polyline points="350.5,125.5 352.5,125.5 355.5,130 355.5,131 350.5,133.5" fill="none" stroke="#00ffff" stroke-width="1" />
<polygon points="415.5,114.5 415.5,94.5 421.5,88.5 430.5,88.5 436.5,94.5 436.5,99.5 441.5,106.5 441.5,107.5 436.5,107.5 436.5,112.5 428.5,112.5 428.5,107.5 423.5,107.5 423.5,114.5" fill="#00ffff" stroke="#000" stroke-width="1" />
<polyline points="415.5,112.5 423.5,112.5" fill="none" stroke="#000" stroke-width="1" />
<polyline points="421.5,115 421.5,137.5 419,137.5" fill="none" stroke="#00ffff" stroke-width="1" />
<polyline points="430.5,112.5 430.5,137.5 433.5,137.5" fill="none" stroke="#00ffff" stroke-width="1" />
<polyline points="421.5,115.5 416.5,115.5 419.5,121.5 421.5,121.5" fill="none" stroke="#00ffff" stroke-width="1" />
<polyline points="421.5,124.5 416.5,128 419.5,133.5 421.5,133.5" fill="none" stroke="#00ffff" stroke-width="1" />
<polyline points="430.5,113.5 432.5,113.5 435.5,118 435.5,119 430.5,121.5" fill="none" stroke="#00ffff" stroke-width="1" />
<polyline points="430.5,125.5 432.5,125.5 435.5,130 435.5,131 430.5,133.5" fill="none" stroke="#00ffff" stroke-width="1" />
<polygon points="506.5,114.5 506.5,107.5 501.5,107.5 501.5,106.5 506.5,99.5 506.5,94.5 512.5,88.5 521.5,88.5 527.5,94.5 527.5,112.5 519.5,112.5 519.5,107.5 514.5,107.5 514.5,114.5" fill="#00ffff" stroke="#000" stroke-width="1" />
<polyline points="506.5,112.5 514.5,112.5" fill="none" stroke="#000" stroke-width="1" />
<polyline points="512.5,115 512.5,137.5 510,137.5" fill="none" stroke="#00ffff" stroke-width="1" />
<polyline points="521.5,112.5 521.5,137.5 524.5,137.5" fill="none" stroke="#00ffff" stroke-width="1" />
<polyline points="512.5,115.5 507.5,115.5 510.5,121.5 512.5,121.5" fill="none" stroke="#00ffff" stroke-width="1" />
<polyline points="512.5,124.5 507.5,128 510.5,133.5 512.5,133.5" fill="none" stroke="#00ffff" stroke-width="1" />
<polyline points="521.5,113.5 523.5,113.5 526.5,118 526.5,119 521.5,121.5" fill="none" stroke="#00ffff" stroke-width="1" />
<polyline points="521.5,125.5 523.5,125.5 526.5,130 526.5,131 521.5,133.5" fill="none" stroke="#00ffff" stroke-width="1" />
<polygon points="562.5,114.5 562.5,107.5 557.5,107.5 557.5,106.5 562.5,99.5 562.5,94.5 568.5,88.5 577.5,88.5 583.5,94.5 583.5,112.5 575.5,112.5 575.5,107.5 570.5,107.5 570.5,114.5" fill="#00ffff" stroke="#000" stroke-width="1" />
<polyline points="562.5,112.5 570.5,112.5" fill="none" stroke="#000" stroke-width="1" />
<polyline points="568.5,115 568.5,137.5 566,137.5" fill="none" stroke="#00ffff" stroke-width="1" />
<polyline points="577.5,112.5 577.5,137.5 580.5,137.5" fill="none" stroke="#00ffff" stroke-width="1" />
<polyline points="568.5,115.5 563.5,115.5 566.5,121.5 568.5,121.5" fill="none" stroke="#00ffff" stroke-width="1" />
<polyline points="568.5,124.5 563.5,128 566.5,133.5 568.5,133.5" fill="none" stroke="#00ffff" stroke-width="1" />
<polyline points="577.5,113.5 579.5,113.5 582.5,118 582.5,119 577.5,121.5" fill="none" stroke="#00ffff" stroke-width="1" />
<polyline points="577.5,125.5 579.5,125.5 582.5,130 582.5,131 577.5,133.5" fill="none" stroke="#00ffff" stroke-width="1" />
<polygon points="634.5,114.5 634.5,107.5 629.5,107.5 629.5,106.5 634.5,99.5 634.5,94.5 640.5,88.5 649.5,88.5 655.5,94.5 655.5,112.5 647.5,112.5 647.5,107.5 642.5,107.5 642.5,114.5" fill="#00ffff" stroke="#000" stroke-width="1" />
<polyline points="634.5,112.5 642.5,112.5" fill="none" stroke="#000" stroke-width="1" />
<polyline points="640.5,115 640.5,137.5 638,137.5" fill="none" stroke="#00ffff" stroke-width="1" />
<polyline points="649.5,112.5 649.5,137.5 652.5,137.5" fill="none" stroke="#00ffff" stroke-width="1" />
<polyline points="640.5,115.5 635.5,115.5 638.5,121.5 640.5,121.5" fill="none" stroke="#00ffff" stroke-width="1" />
<polyline points="640.5,124.5 635.5,128 638.5,133.5 640.5,133.5" fill="none" stroke="#00ffff" stroke-width="1" />
<polyline points="649.5,113.5 651.5,113.5 654.5,118 654.5,119 649.5,121.5" fill="none" stroke="#00ffff" stroke-width="1" />
<polyline points="649.5,125.5 651.5,125.5 654.5,130 654.5,131 649.5,133.5" fill="none" stroke="#00ffff" stroke-width="1" />
<polygon points="708.5,114.5 708.5,94.5 714.5,88.5 723.5,88.5 729.5,94.5 729.5,99.5 734.5,106.5 734.5,107.5 729.5,107.5 729.5,112.5 721.5,112.5 721.5,107.5 716.5,107.5 716.5,114.5" fill="#00ffff" stroke="#000" stroke-width="1" />
<polyline points="708.5,112.5 716.5,112.5" fill="none" stroke="#000" stroke-width="1" />
<polyline points="714.5,115 714.5,137.5 712,137.5" fill="none" stroke="#00ffff" stroke-width="1" />
<polyline points="723.5,112.5 723.5,137.5 726.5,137.5" fill="none" stroke="#00ffff" stroke-width="1" />
<polyline points="714.5,115.5 709.5,115.5 712.5,121.5 714.5,121.5" fill="none" stroke="#00ffff" stroke-width="1" />
<polyline points="714.5,124.5 709.5,128 712.5,133.5 714.5,133.5" fill="none" stroke="#00ffff" stroke-width="1" />
<polyline points="723.5,113.5 725.5,113.5 728.5,118 728.5,119 723.5,121.5" fill="none" stroke="#00ffff" stroke-width="1" />
<polyline points="723.5,125.5 725.5,125.5 728.5,130 728.5,131 723.5,133.5" fill="none" stroke="#00ffff" stroke-width="1" />
<polygon points="777.5,114.5 777.5,94.5 783.5,88.5 792.5,88.5 798.5,94.5 798.5,99.5 803.5,106.5 803.5,107.5 798.5,107.5 798.5,112.5 790.5,112.5 790.5,107.5 785.5,107.5 785.5,114.5" fill="#00ffff" stroke="#000" stroke-width="1" />
<polyline points="777.5,112.5 785.5,112.5" fill="none" stroke="#000" stroke-width="1" />
<polyline points="783.5,115 783.5,137.5 781,137.5" fill="none" stroke="#00ffff" stroke-width="1" />
<polyline points="792.5,112.5 792.5,137.5 795.5,137.5" fill="none" stroke="#00ffff" stroke-width="1" />
<polyline points="783.5,115.5 778.5,115.5 781.5,121.5 783.5,121.5" fill="none" stroke="#00ffff" stroke-width="1" />
<polyline points="783.5,124.5 778.5,128 781.5,133.5 783.5,133.5" fill="none" stroke="#00ffff" stroke-width="1" />
<polyline points="792.5,113.5 794.5,113.5 797.5,118 797.5,119 792.5,121.5" fill="none" stroke="#00ffff" stroke-width="1" />
<polyline points="792.5,125.5 794.5,125.5 797.5,130 797.5,131 792.5,133.5" fill="none" stroke="#00ffff" stroke-width="1" />
<polygon points="844.5,114.5 844.5,94.5 850.5,88.5 859.5,88.5 865.5,94.5 865.5,99.5 870.5,106.5 870.5,107.5 865.5,107.5 865.5,112.5 857.5,112.5 857.5,107.5 852.5,107.5 852.5,114.5" fill="#00ffff" stroke="#000" stroke-width="1" />
<polyline points="844.5,112.5 852.5,112.5" fill="none" stroke="#000" stroke-width="1" />
<polyline points="850.5,115 850.5,137.5 848,137.5" fill="none" stroke="#00ffff" stroke-width="1" />
<polyline points="859.5,112.5 859.5,137.5 862.5,137.5" fill="none" stroke="#00ffff" stroke-width="1" />
<polyline points="850.5,115.5 845.5,115.5 848.5,121.5 850.5,121.5" fill="none" stroke="#00ffff" stroke-width="1" />
<polyline points="850.5,124.5 845.5,128 848.5,133.5 850.5,133.5" fill="none" stroke="#00ffff" stroke-width="1" />
<polyline points="859.5,113.5 861.5,113.5 864.5,118 864.5,119 859.5,121.5" fill="none" stroke="#00ffff" stroke-width="1" />
<polyline points="859.5,125.5 861.5,125.5 864.5,130 864.5,131 859.5,133.5" fill="none" stroke="#00ffff" stroke-width="1" />
<polygon points="119.5,699.5 127.5,699.5 127.5,704.5 132.5,704.5 132.5,700.5 140.5,700.5 140.5,718.5 134.5,724.5 125.5,724.5 119.5,718.5 119.5,712.5 114.5,706.5 114.5,705.5 119.5,705.5" fill="#00ffff" stroke="#000" stroke-width="1" />
<polyline points="119.5,701.5 127.5,701.5" fill="none" stroke="#000" stroke-width="1" />
<rect x="127.5" y="707.5" width="6" height="4" fill="#00ffff" stroke="#000" stroke-width="1" />
<circle cx="130.5" cy="716.5" r="3" fill="#00ffff" stroke="#000" stroke-width="1"  shape-rendering="geometricPrecision"/>
<polyline points="123,675 125.5,675 125.5,699.5" fill="none" stroke="#00ffff" stroke-width="1" />
<polyline points="137,675 134.5,675 134.5,700" fill="none" stroke="#00ffff" stroke-width="1" />
<polyline points="125.5,678 120.5,685 125.5,686 120.5,685" fill="none" stroke="#00ffff" stroke-width="1" />
<polyline points="134.5,677 139.5,681 134.5,685.5" fill="none" stroke="#00ffff" stroke-width="1" />
<polyline points="134.5,681 139.5,681" fill="none" stroke="#00ffff" stroke-width="1" />
<polyline points="125.5,689.5 120.5,696.5 125.5,697.5 120.5,696.5" fill="none" stroke="#00ffff" stroke-width="1" />
<polyline points="134.5,688.5 139.5,692.5 134.5,697" fill="none" stroke="#00ffff" stroke-width="1" />
<polyline points="134.5,692.5 139.5,692.5" fill="none" stroke="#00ffff" stroke-width="1" />
<polygon points="211.5,699.5 219.5,699.5 219.5,704.5 224.5,704.5 224.5,700.5 232.5,700.5 232.5,718.5 226.5,724.5 217.5,724.5 211.5,718.5 211.5,712.5 206.5,706.5 206.5,705.5 211.5,705.5" fill="#00ffff" stroke="#000" stroke-width="1" />
<polyline points="211.5,701.5 219.5,701.5" fill="none" stroke="#000" stroke-width="1" />
<rect x="219.5" y="707.5" width="6" height="4" fill="#00ffff" stroke="#000" stroke-width="1" />
<circle cx="222.5" cy="716.5" r="3" fill="#00ffff" stroke="#000" stroke-width="1"  shape-rendering="geometricPrecision"/>
<polyline points="215,675 217.5,675 217.5,699.5" fill="none" stroke="#00ffff" stroke-width="1" />
<polyline points="229,675 226.5,675 226.5,700" fill="none" stroke="#00ffff" stroke-width="1" />
<polyline points="217.5,678 212.5,685 217.5,686 212.5,685" fill="none" stroke="#00ffff" stroke-width="1" />
<polyline points="226.5,677 231.5,681 226.5,685.5" fill="none" stroke="#00ffff" stroke-width="1" />
<polyline points="226.5,681 231.5,681" fill="none" stroke="#00ffff" stroke-width="1" />
<polyline points="217.5,689.5 212.5,696.5 217.5,697.5 212.5,696.5" fill="none" stroke="#00ffff" stroke-width="1" />
<polyline points="226.5,688.5 231.5,692.5 226.5,697" fill="none" stroke="#00ffff" stroke-width="1" />
<polyline points="226.5,692.5 231.5,692.5" fill="none" stroke="#00ffff" stroke-width="1" />
<polygon points="268.5,699.5 276.5,699.5 276.5,704.5 281.5,704.5 281.5,700.5 289.5,700.5 289.5,718.5 283.5,724.5 274.5,724.5 268.5,718.5 268.5,712.5 263.5,706.5 263.5,705.5 268.5,705.5" fill="#00ffff" stroke="#000" stroke-width="1" />
<polyline points="268.5,701.5 276.5,701.5" fill="none" stroke="#000" stroke-width="1" />
<rect x="276.5" y="707.5" width="6" height="4" fill="#00ffff" stroke="#000" stroke-width="1" />
<circle cx="279.5" cy="716.5" r="3" fill="#00ffff" stroke="#000" stroke-width="1"  shape-rendering="geometricPrecision"/>
<polyline points="272,675 274.5,675 274.5,699.5" fill="none" stroke="#00ffff" stroke-width="1" />
<polyline points="286,675 283.5,675 283.5,700" fill="none" stroke="#00ffff" stroke-width="1" />
<polyline points="274.5,678 269.5,685 274.5,686 269.5,685" fill="none" stroke="#00ffff" stroke-width="1" />
<polyline points="283.5,677 288.5,681 283.5,685.5" fill="none" stroke="#00ffff" stroke-width="1" />
<polyline points="283.5,681 288.5,681" fill="none" stroke="#00ffff" stroke-width="1" />
<polyline points="274.5,689.5 269.5,696.5 274.5,697.5 269.5,696.5" fill="none" stroke="#00ffff" stroke-width="1" />
<polyline points="283.5,688.5 288.5,692.5 283.5,697" fill="none" stroke="#00ffff" stroke-width="1" />
<polyline points="283.5,692.5 288.5,692.5" fill="none" stroke="#00ffff" stroke-width="1" />
<polygon points="329.5,699.5 337.5,699.5 337.5,704.5 342.5,704.5 342.5,700.5 350.5,700.5 350.5,718.5 344.5,724.5 335.5,724.5 329.5,718.5 329.5,712.5 324.5,706.5 324.5,705.5 329.5,705.5" fill="#00ffff" stroke="#000" stroke-width="1" />
<polyline points="329.5,701.5 337.5,701.5" fill="none" stroke="#000" stroke-width="1" />
<rect x="337.5" y="707.5" width="6" height="4" fill="#00ffff" stroke="#000" stroke-width="1" />
<circle cx="340.5" cy="716.5" r="3" fill="#00ffff" stroke="#000" stroke-width="1"  shape-rendering="geometricPrecision"/>
<polyline points="333,675 335.5,675 335.5,699.5" fill="none" stroke="#00ffff" stroke-width="1" />
<polyline points="347,675 344.5,675 344.5,700" fill="none" stroke="#00ffff" stroke-width="1" />
<polyline points="335.5,678 330.5,685 335.5,686 330.5,685" fill="none" stroke="#00ffff" stroke-width="1" />
<polyline points="344.5,677 349.5,681 344.5,685.5" fill="none" stroke="#00ffff" stroke-width="1" />
<polyline points="344.5,681 349.5,681" fill="none" stroke="#00ffff" stroke-width="1" />
<polyline points="335.5,689.5 330.5,696.5 335.5,697.5 330.5,696.5" fill="none" stroke="#00ffff" stroke-width="1" />
<polyline points="344.5,688.5 349.5,692.5 344.5,697" fill="none" stroke="#00ffff" stroke-width="1" />
<polyline points="344.5,692.5 349.5,692.5" fill="none" stroke="#00ffff" stroke-width="1" />
<polygon points="417.5,699.5 425.5,699.5 425.5,704.5 430.5,704.5 430.5,700.5 438.5,700.5 438.5,718.5 432.5,724.5 423.5,724.5 417.5,718.5 417.5,712.5 412.5,706.5 412.5,705.5 417.5,705.5" fill="#00ffff" stroke="#000" stroke-width="1" />
<polyline points="417.5,701.5 425.5,701.5" fill="none" stroke="#000" stroke-width="1" />
<rect x="425.5" y="707.5" width="6" height="4" fill="#00ffff" stroke="#000" stroke-width="1" />
<circle cx="428.5" cy="716.5" r="3" fill="#00ffff" stroke="#000" stroke-width="1"  shape-rendering="geometricPrecision"/>
<polyline points="421,675 423.5,675 423.5,699.5" fill="none" stroke="#00ffff" stroke-width="1" />
<polyline points="435,675 432.5,675 432.5,700" fill="none" stroke="#00ffff" stroke-width="1" />
<polyline points="423.5,678 418.5,685 423.5,686 418.5,685" fill="none" stroke="#00ffff" stroke-width="1" />
<polyline points="432.5,677 437.5,681 432.5,685.5" fill="none" stroke="#00ffff" stroke-width="1" />
<polyline points="432.5,681 437.5,681" fill="none" stroke="#00ffff" stroke-width="1" />
<polyline points="423.5,689.5 418.5,696.5 423.5,697.5 418.5,696.5" fill="none" stroke="#00ffff" stroke-width="1" />
<polyline points="432.5,688.5 437.5,692.5 432.5,697" fill="none" stroke="#00ffff" stroke-width="1" />
<polyline points="432.5,692.5 437.5,692.5" fill="none" stroke="#00ffff" stroke-width="1" />
<polygon points="506.5,699.5 514.5,699.5 514.5,704.5 519.5,704.5 519.5,700.5 527.5,700.5 527.5,718.5 521.5,724.5 512.5,724.5 506.5,718.5 506.5,712.5 501.5,706.5 501.5,705.5 506.5,705.5" fill="#00ffff" stroke="#000" stroke-width="1" />
<polyline points="506.5,701.5 514.5,701.5" fill="none" stroke="#000" stroke-width="1" />
<rect x="514.5" y="707.5" width="6" height="4" fill="#00ffff" stroke="#000" stroke-width="1" />
<circle cx="517.5" cy="716.5" r="3" fill="#00ffff" stroke="#000" stroke-width="1"  shape-rendering="geometricPrecision"/>
<polyline points="510,675 512.5,675 512.5,699.5" fill="none" stroke="#00ffff" stroke-width="1" />
<polyline points="524,675 521.5,675 521.5,700" fill="none" stroke="#00ffff" stroke-width="1" />
<polyline points="512.5,678 507.5,685 512.5,686 507.5,685" fill="none" stroke="#00ffff" stroke-width="1" />
<polyline points="521.5,677 526.5,681 521.5,685.5" fill="none" stroke="#00ffff" stroke-width="1" />
<polyline points="521.5,681 526.5,681" fill="none" stroke="#00ffff" stroke-width="1" />
<polyline points="512.5,689.5 507.5,696.5 512.5,697.5 507.5,696.5" fill="none" stroke="#00ffff" stroke-width="1" />
<polyline points="521.5,688.5 526.5,692.5 521.5,697" fill="none" stroke="#00ffff" stroke-width="1" />
<polyline points="521.5,692.5 526.5,692.5" fill="none" stroke="#00ffff" stroke-width="1" />
<polygon points="563.5,699.5 571.5,699.5 571.5,704.5 576.5,704.5 576.5,700.5 584.5,700.5 584.5,718.5 578.5,724.5 569.5,724.5 563.5,718.5 563.5,712.5 558.5,706.5 558.5,705.5 563.5,705.5" fill="#00ffff" stroke="#000" stroke-width="1" />
<polyline points="563.5,701.5 571.5,701.5" fill="none" stroke="#000" stroke-width="1" />
<rect x="571.5" y="707.5" width="6" height="4" fill="#00ffff" stroke="#000" stroke-width="1" />
<circle cx="574.5" cy="716.5" r="3" fill="#00ffff" stroke="#000" stroke-width="1"  shape-rendering="geometricPrecision"/>
<polyline points="567,675 569.5,675 569.5,699.5" fill="none" stroke="#00ffff" stroke-width="1" />
<polyline points="581,675 578.5,675 578.5,700" fill="none" stroke="#00ffff" stroke-width="1" />
<polyline points="569.5,678 564.5,685 569.5,686 564.5,685" fill="none" stroke="#00ffff" stroke-width="1" />
<polyline points="578.5,677 583.5,681 578.5,685.5" fill="none" stroke="#00ffff" stroke-width="1" />
<polyline points="578.5,681 583.5,681" fill="none" stroke="#00ffff" stroke-width="1" />
<polyline points="569.5,689.5 564.5,696.5 569.5,697.5 564.5,696.5" fill="none" stroke="#00ffff" stroke-width="1" />
<polyline points="578.5,688.5 583.5,692.5 578.5,697" fill="none" stroke="#00ffff" stroke-width="1" />
<polyline points="578.5,692.5 583.5,692.5" fill="none" stroke="#00ffff" stroke-width="1" />
<polygon points="632.5,699.5 640.5,699.5 640.5,704.5 645.5,704.5 645.5,700.5 653.5,700.5 653.5,718.5 647.5,724.5 638.5,724.5 632.5,718.5 632.5,712.5 627.5,706.5 627.5,705.5 632.5,705.5" fill="#00ffff" stroke="#000" stroke-width="1" />
<polyline points="632.5,701.5 640.5,701.5" fill="none" stroke="#000" stroke-width="1" />
<rect x="640.5" y="707.5" width="6" height="4" fill="#00ffff" stroke="#000" stroke-width="1" />
<circle cx="643.5" cy="716.5" r="3" fill="#00ffff" stroke="#000" stroke-width="1"  shape-rendering="geometricPrecision"/>
<polyline points="636,675 638.5,675 638.5,699.5" fill="none" stroke="#00ffff" stroke-width="1" />
<polyline points="650,675 647.5,675 647.5,700" fill="none" stroke="#00ffff" stroke-width="1" />
<polyline points="638.5,678 633.5,685 638.5,686 633.5,685" fill="none" stroke="#00ffff" stroke-width="1" />
<polyline points="647.5,677 652.5,681 647.5,685.5" fill="none" stroke="#00ffff" stroke-width="1" />
<polyline points="647.5,681 652.5,681" fill="none" stroke="#00ffff" stroke-width="1" />
<polyline points="638.5,689.5 633.5,696.5 638.5,697.5 633.5,696.5" fill="none" stroke="#00ffff" stroke-width="1" />
<polyline points="647.5,688.5 652.5,692.5 647.5,697" fill="none" stroke="#00ffff" stroke-width="1" />
<polyline points="647.5,692.5 652.5,692.5" fill="none" stroke="#00ffff" stroke-width="1" />
<polygon points="725.5,699.5 733.5,699.5 733.5,704.5 738.5,704.5 738.5,700.5 746.5,700.5 746.5,718.5 740.5,724.5 731.5,724.5 725.5,718.5 725.5,712.5 720.5,706.5 720.5,705.5 725.5,705.5" fill="#00ffff" stroke="#000" stroke-width="1" />
<polyline points="725.5,701.5 733.5,701.5" fill="none" stroke="#000" stroke-width="1" />
<rect x="733.5" y="707.5" width="6" height="4" fill="#00ffff" stroke="#000" stroke-width="1" />
<circle cx="736.5" cy="716.5" r="3" fill="#00ffff" stroke="#000" stroke-width="1"  shape-rendering="geometricPrecision"/>
<polyline points="729,675 731.5,675 731.5,699.5" fill="none" stroke="#00ffff" stroke-width="1" />
<polyline points="743,675 740.5,675 740.5,700" fill="none" stroke="#00ffff" stroke-width="1" />
<polyline points="731.5,678 726.5,685 731.5,686 726.5,685" fill="none" stroke="#00ffff" stroke-width="1" />
<polyline points="740.5,677 745.5,681 740.5,685.5" fill="none" stroke="#00ffff" stroke-width="1" />
<polyline points="740.5,681 745.5,681" fill="none" stroke="#00ffff" stroke-width="1" />
<polyline points="731.5,689.5 726.5,696.5 731.5,697.5 726.5,696.5" fill="none" stroke="#00ffff" stroke-width="1" />
<polyline points="740.5,688.5 745.5,692.5 740.5,697" fill="none" stroke="#00ffff" stroke-width="1" />
<polyline points="740.5,692.5 745.5,692.5" fill="none" stroke="#00ffff" stroke-width="1" />
<polygon points="776.5,699.5 784.5,699.5 784.5,704.5 789.5,704.5 789.5,700.5 797.5,700.5 797.5,718.5 791.5,724.5 782.5,724.5 776.5,718.5 776.5,712.5 771.5,706.5 771.5,705.5 776.5,705.5" fill="#00ffff" stroke="#000" stroke-width="1" />
<polyline points="776.5,701.5 784.5,701.5" fill="none" stroke="#000" stroke-width="1" />
<rect x="784.5" y="707.5" width="6" height="4" fill="#00ffff" stroke="#000" stroke-width="1" />
<circle cx="787.5" cy="716.5" r="3" fill="#00ffff" stroke="#000" stroke-width="1"  shape-rendering="geometricPrecision"/>
<polyline points="780,675 782.5,675 782.5,699.5" fill="none" stroke="#00ffff" stroke-width="1" />
<polyline points="794,675 791.5,675 791.5,700" fill="none" stroke="#00ffff" stroke-width="1" />
<polyline points="782.5,678 777.5,685 782.5,686 777.5,685" fill="none" stroke="#00ffff" stroke-width="1" />
<polyline points="791.5,677 796.5,681 791.5,685.5" fill="none" stroke="#00ffff" stroke-width="1" />
<polyline points="791.5,681 796.5,681" fill="none" stroke="#00ffff" stroke-width="1" />
<polyline points="782.5,689.5 777.5,696.5 782.5,697.5 777.5,696.5" fill="none" stroke="#00ffff" stroke-width="1" />
<polyline points="791.5,688.5 796.5,692.5 791.5,697" fill="none" stroke="#00ffff" stroke-width="1" />
<polyline points="791.5,692.5 796.5,692.5" fill="none" stroke="#00ffff" stroke-width="1" />
<polygon points="845.5,699.5 853.5,699.5 853.5,704.5 858.5,704.5 858.5,700.5 866.5,700.5 866.5,705.5 871.5,705.5 871.5,706.5 866.5,712.5 866.5,718.5 860.5,724.5 851.5,724.5 845.5,718.5" fill="#00ffff" stroke="#000" stroke-width="1" />
<polyline points="845.5,701.5 853.5,701.5" fill="none" stroke="#000" stroke-width="1" />
<rect x="853.5" y="707.5" width="6" height="4" fill="#00ffff" stroke="#000" stroke-width="1" />
<circle cx="856.5" cy="716.5" r="3" fill="#00ffff" stroke="#000" stroke-width="1"  shape-rendering="geometricPrecision"/>
<polyline points="849,675 851.5,675 851.5,699.5" fill="none" stroke="#00ffff" stroke-width="1" />
<polyline points="863,675 860.5,675 860.5,700" fill="none" stroke="#00ffff" stroke-width="1" />
<polyline points="851.5,678 846.5,685 851.5,686 846.5,685" fill="none" stroke="#00ffff" stroke-width="1" />
<polyline points="860.5,677 865.5,681 860.5,685.5" fill="none" stroke="#00ffff" stroke-width="1" />
<polyline points="860.5,681 865.5,681" fill="none" stroke="#00ffff" stroke-width="1" />
<polyline points="851.5,689.5 846.5,696.5 851.5,697.5 846.5,696.5" fill="none" stroke="#00ffff" stroke-width="1" />
<polyline points="860.5,688.5 865.5,692.5 860.5,697" fill="none" stroke="#00ffff" stroke-width="1" />
<polyline points="860.5,692.5 865.5,692.5" fill="none" stroke="#00ffff" stroke-width="1" />
<path d="M139 153h2v10h-2z M208 153h1v10h-1zM141 157h3v2h-3z M148 156H208v1H148z M148 159H208v1H148z" fill="#00ffff" stroke="none"/>
<path d="M150 153h2v1h-2zM150 154h2v1h-2zM149 155h1v1h-1zM151 155h2v1h-2zM152 156h1v1h-1zM152 157h2v1h-2zM153 158h1v1h-1zM153 159h2v1h-2zM154 160h1v1h-1zM158 160h1v1h-1zM154 161h2v1h-2zM157 161h1v1h-1zM155 162h2v1h-2z" fill="#00ffff" stroke="none"/>
<path d="M162 153h2v1h-2zM162 154h2v1h-2zM161 155h1v1h-1zM163 155h2v1h-2zM164 156h1v1h-1zM164 157h2v1h-2zM165 158h1v1h-1zM165 159h2v1h-2zM166 160h1v1h-1zM170 160h1v1h-1zM166 161h2v1h-2zM169 161h1v1h-1zM167 162h2v1h-2z" fill="#00ffff" stroke="none"/>
<path d="M174 153h2v1h-2zM174 154h2v1h-2zM173 155h1v1h-1zM175 155h2v1h-2zM176 156h1v1h-1zM176 157h2v1h-2zM177 158h1v1h-1zM177 159h2v1h-2zM178 160h1v1h-1zM182 160h1v1h-1zM178 161h2v1h-2zM181 161h1v1h-1zM179 162h2v1h-2z" fill="#00ffff" stroke="none"/>
<path d="M186 153h2v1h-2zM186 154h2v1h-2zM185 155h1v1h-1zM187 155h2v1h-2zM188 156h1v1h-1zM188 157h2v1h-2zM189 158h1v1h-1zM189 159h2v1h-2zM190 160h1v1h-1zM194 160h1v1h-1zM190 161h2v1h-2zM193 161h1v1h-1zM191 162h2v1h-2z" fill="#00ffff" stroke="none"/>
<path d="M198 153h2v1h-2zM198 154h2v1h-2zM197 155h1v1h-1zM199 155h2v1h-2zM200 156h1v1h-1zM200 157h2v1h-2zM201 158h1v1h-1zM201 159h2v1h-2zM202 160h1v1h-1zM206 160h1v1h-1zM202 161h2v1h-2zM205 161h1v1h-1zM203 162h2v1h-2z" fill="#00ffff" stroke="none"/>
<circle cx="146.5" cy="158.5" r="3.2" fill="#00ffff" stroke="#000" stroke-width="1"  shape-rendering="geometricPrecision"/>
<rect x="200.5" y="148.5" width="6.5" height="4" fill="#00ffff" stroke="#000" stroke-width="1" />
<path d="M356 167h2v10h-2z M426 167h1v10h-1zM358 171h3v2h-3z M365 170H426v1H365z M365 173H426v1H365z" fill="#00ffff" stroke="none"/>
<path d="M367 167h2v1h-2zM367 168h2v1h-2zM366 169h1v1h-1zM368 169h2v1h-2zM369 170h1v1h-1zM369 171h2v1h-2zM370 172h1v1h-1zM370 173h2v1h-2zM371 174h1v1h-1zM375 174h1v1h-1zM371 175h2v1h-2zM374 175h1v1h-1zM372 176h2v1h-2z" fill="#00ffff" stroke="none"/>
<path d="M379 167h2v1h-2zM379 168h2v1h-2zM378 169h1v1h-1zM380 169h2v1h-2zM381 170h1v1h-1zM381 171h2v1h-2zM382 172h1v1h-1zM382 173h2v1h-2zM383 174h1v1h-1zM387 174h1v1h-1zM383 175h2v1h-2zM386 175h1v1h-1zM384 176h2v1h-2z" fill="#00ffff" stroke="none"/>
<path d="M391 167h2v1h-2zM391 168h2v1h-2zM390 169h1v1h-1zM392 169h2v1h-2zM393 170h1v1h-1zM393 171h2v1h-2zM394 172h1v1h-1zM394 173h2v1h-2zM395 174h1v1h-1zM399 174h1v1h-1zM395 175h2v1h-2zM398 175h1v1h-1zM396 176h2v1h-2z" fill="#00ffff" stroke="none"/>
<path d="M403 167h2v1h-2zM403 168h2v1h-2zM402 169h1v1h-1zM404 169h2v1h-2zM405 170h1v1h-1zM405 171h2v1h-2zM406 172h1v1h-1zM406 173h2v1h-2zM407 174h1v1h-1zM411 174h1v1h-1zM407 175h2v1h-2zM410 175h1v1h-1zM408 176h2v1h-2z" fill="#00ffff" stroke="none"/>
<path d="M415 167h2v1h-2zM415 168h2v1h-2zM414 169h1v1h-1zM416 169h2v1h-2zM417 170h1v1h-1zM417 171h2v1h-2zM418 172h1v1h-1zM418 173h2v1h-2zM419 174h1v1h-1zM423 174h1v1h-1zM419 175h2v1h-2zM422 175h1v1h-1zM420 176h2v1h-2z" fill="#00ffff" stroke="none"/>
<circle cx="363.5" cy="172" r="3.2" fill="#00ffff" stroke="#000" stroke-width="1"  shape-rendering="geometricPrecision"/>
<rect x="419.5" y="161" width="6.5" height="4" fill="#00ffff" stroke="#000" stroke-width="1" />
<path d="M550 191h2v10h-2z M655 191h1v10h-1zM552 195h3v2h-3z M559 194H655v1H559z M559 197H655v1H559z" fill="#00ffff" stroke="none"/>
<path d="M561 191h2v1h-2zM561 192h2v1h-2zM560 193h1v1h-1zM562 193h2v1h-2zM563 194h1v1h-1zM563 195h2v1h-2zM564 196h1v1h-1zM564 197h2v1h-2zM565 198h1v1h-1zM569 198h1v1h-1zM565 199h2v1h-2zM568 199h1v1h-1zM566 200h2v1h-2z" fill="#00ffff" stroke="none"/>
<path d="M573 191h2v1h-2zM573 192h2v1h-2zM572 193h1v1h-1zM574 193h2v1h-2zM575 194h1v1h-1zM575 195h2v1h-2zM576 196h1v1h-1zM576 197h2v1h-2zM577 198h1v1h-1zM581 198h1v1h-1zM577 199h2v1h-2zM580 199h1v1h-1zM578 200h2v1h-2z" fill="#00ffff" stroke="none"/>
<path d="M585 191h2v1h-2zM585 192h2v1h-2zM584 193h1v1h-1zM586 193h2v1h-2zM587 194h1v1h-1zM587 195h2v1h-2zM588 196h1v1h-1zM588 197h2v1h-2zM589 198h1v1h-1zM593 198h1v1h-1zM589 199h2v1h-2zM592 199h1v1h-1zM590 200h2v1h-2z" fill="#00ffff" stroke="none"/>
<path d="M597 191h2v1h-2zM597 192h2v1h-2zM596 193h1v1h-1zM598 193h2v1h-2zM599 194h1v1h-1zM599 195h2v1h-2zM600 196h1v1h-1zM600 197h2v1h-2zM601 198h1v1h-1zM605 198h1v1h-1zM601 199h2v1h-2zM604 199h1v1h-1zM602 200h2v1h-2z" fill="#00ffff" stroke="none"/>
<path d="M609 191h2v1h-2zM609 192h2v1h-2zM608 193h1v1h-1zM610 193h2v1h-2zM611 194h1v1h-1zM611 195h2v1h-2zM612 196h1v1h-1zM612 197h2v1h-2zM613 198h1v1h-1zM617 198h1v1h-1zM613 199h2v1h-2zM616 199h1v1h-1zM614 200h2v1h-2z" fill="#00ffff" stroke="none"/>
<path d="M621 191h2v1h-2zM621 192h2v1h-2zM620 193h1v1h-1zM622 193h2v1h-2zM623 194h1v1h-1zM623 195h2v1h-2zM624 196h1v1h-1zM624 197h2v1h-2zM625 198h1v1h-1zM629 198h1v1h-1zM625 199h2v1h-2zM628 199h1v1h-1zM626 200h2v1h-2z" fill="#00ffff" stroke="none"/>
<path d="M633 191h2v1h-2zM633 192h2v1h-2zM632 193h1v1h-1zM634 193h2v1h-2zM635 194h1v1h-1zM635 195h2v1h-2zM636 196h1v1h-1zM636 197h2v1h-2zM637 198h1v1h-1zM641 198h1v1h-1zM637 199h2v1h-2zM640 199h1v1h-1zM638 200h2v1h-2z" fill="#00ffff" stroke="none"/>
<path d="M645 191h2v1h-2zM645 192h2v1h-2zM644 193h1v1h-1zM646 193h2v1h-2zM647 194h1v1h-1zM647 195h2v1h-2zM648 196h1v1h-1zM648 197h2v1h-2zM649 198h1v1h-1zM653 198h1v1h-1zM649 199h2v1h-2zM652 199h1v1h-1zM650 200h2v1h-2z" fill="#00ffff" stroke="none"/>
<circle cx="558.5" cy="196" r="3.2" fill="#00ffff" stroke="#000" stroke-width="1"  shape-rendering="geometricPrecision"/>
<rect x="646.5" y="185.5" width="6.5" height="4" fill="#00ffff" stroke="#000" stroke-width="1" />
<path d="M685 191h2v10h-2z M719 191h1v10h-1zM687 195h3v2h-3z M694 194H719v1H694z M694 197H719v1H694z" fill="#00ffff" stroke="none"/>
<path d="M696 191h2v1h-2zM696 192h2v1h-2zM695 193h1v1h-1zM697 193h2v1h-2zM698 194h1v1h-1zM698 195h2v1h-2zM699 196h1v1h-1zM699 197h2v1h-2zM700 198h1v1h-1zM704 198h1v1h-1zM700 199h2v1h-2zM703 199h1v1h-1zM701 200h2v1h-2z" fill="#00ffff" stroke="none"/>
<path d="M708 191h2v1h-2zM708 192h2v1h-2zM707 193h1v1h-1zM709 193h2v1h-2zM710 194h1v1h-1zM710 195h2v1h-2zM711 196h1v1h-1zM711 197h2v1h-2zM712 198h1v1h-1zM716 198h1v1h-1zM712 199h2v1h-2zM715 199h1v1h-1zM713 200h2v1h-2z" fill="#00ffff" stroke="none"/>
<circle cx="690.5" cy="196" r="3.2" fill="#00ffff" stroke="#000" stroke-width="1"  shape-rendering="geometricPrecision"/>
<rect x="712.5" y="185.5" width="6.5" height="4" fill="#00ffff" stroke="#000" stroke-width="1" />
<path d="M15 516h2v10h-2z M85 516h1v10h-1zM17 520h3v2h-3z M24 519H85v1H24z M24 522H85v1H24z" fill="#00ffff" stroke="none"/>
<path d="M26 516h2v1h-2zM26 517h2v1h-2zM25 518h1v1h-1zM27 518h2v1h-2zM28 519h1v1h-1zM28 520h2v1h-2zM29 521h1v1h-1zM29 522h2v1h-2zM30 523h1v1h-1zM34 523h1v1h-1zM30 524h2v1h-2zM33 524h1v1h-1zM31 525h2v1h-2z" fill="#00ffff" stroke="none"/>
<path d="M38 516h2v1h-2zM38 517h2v1h-2zM37 518h1v1h-1zM39 518h2v1h-2zM40 519h1v1h-1zM40 520h2v1h-2zM41 521h1v1h-1zM41 522h2v1h-2zM42 523h1v1h-1zM46 523h1v1h-1zM42 524h2v1h-2zM45 524h1v1h-1zM43 525h2v1h-2z" fill="#00ffff" stroke="none"/>
<path d="M50 516h2v1h-2zM50 517h2v1h-2zM49 518h1v1h-1zM51 518h2v1h-2zM52 519h1v1h-1zM52 520h2v1h-2zM53 521h1v1h-1zM53 522h2v1h-2zM54 523h1v1h-1zM58 523h1v1h-1zM54 524h2v1h-2zM57 524h1v1h-1zM55 525h2v1h-2z" fill="#00ffff" stroke="none"/>
<path d="M62 516h2v1h-2zM62 517h2v1h-2zM61 518h1v1h-1zM63 518h2v1h-2zM64 519h1v1h-1zM64 520h2v1h-2zM65 521h1v1h-1zM65 522h2v1h-2zM66 523h1v1h-1zM70 523h1v1h-1zM66 524h2v1h-2zM69 524h1v1h-1zM67 525h2v1h-2z" fill="#00ffff" stroke="none"/>
<path d="M74 516h2v1h-2zM74 517h2v1h-2zM73 518h1v1h-1zM75 518h2v1h-2zM76 519h1v1h-1zM76 520h2v1h-2zM77 521h1v1h-1zM77 522h2v1h-2zM78 523h1v1h-1zM82 523h1v1h-1zM78 524h2v1h-2zM81 524h1v1h-1zM79 525h2v1h-2z" fill="#00ffff" stroke="none"/>
<circle cx="21.5" cy="521" r="3.2" fill="#00ffff" stroke="#000" stroke-width="1"  shape-rendering="geometricPrecision"/>
<rect x="76" y="512" width="6.5" height="4" fill="#00ffff" stroke="#000" stroke-width="1" />
<path d="M101 516h2v10h-2z M170 516h1v10h-1zM103 519H164v1H103z M103 522H164v1H103z" fill="#00ffff" stroke="none"/>
<path d="M103 520h2v1h-2zM104 521h1v1h-1zM104 522h2v1h-2zM105 523h1v1h-1zM109 523h1v1h-1zM105 524h2v1h-2zM108 524h1v1h-1zM106 525h2v1h-2z" fill="#00ffff" stroke="none"/>
<path d="M112 516h2v1h-2zM112 517h2v1h-2zM111 518h1v1h-1zM113 518h2v1h-2zM114 519h1v1h-1zM114 520h2v1h-2zM115 521h1v1h-1zM115 522h2v1h-2zM116 523h1v1h-1zM120 523h1v1h-1zM116 524h2v1h-2zM119 524h1v1h-1zM117 525h2v1h-2z" fill="#00ffff" stroke="none"/>
<path d="M124 516h2v1h-2zM124 517h2v1h-2zM123 518h1v1h-1zM125 518h2v1h-2zM126 519h1v1h-1zM126 520h2v1h-2zM127 521h1v1h-1zM127 522h2v1h-2zM128 523h1v1h-1zM132 523h1v1h-1zM128 524h2v1h-2zM131 524h1v1h-1zM129 525h2v1h-2z" fill="#00ffff" stroke="none"/>
<path d="M136 516h2v1h-2zM136 517h2v1h-2zM135 518h1v1h-1zM137 518h2v1h-2zM138 519h1v1h-1zM138 520h2v1h-2zM139 521h1v1h-1zM139 522h2v1h-2zM140 523h1v1h-1zM144 523h1v1h-1zM140 524h2v1h-2zM143 524h1v1h-1zM141 525h2v1h-2z" fill="#00ffff" stroke="none"/>
<path d="M148 516h2v1h-2zM148 517h2v1h-2zM147 518h1v1h-1zM149 518h2v1h-2zM150 519h1v1h-1zM150 520h2v1h-2zM151 521h1v1h-1zM151 522h2v1h-2zM152 523h1v1h-1zM156 523h1v1h-1zM152 524h2v1h-2zM155 524h1v1h-1zM153 525h2v1h-2z" fill="#00ffff" stroke="none"/>
<circle cx="166.5" cy="521" r="3.2" fill="#00ffff" stroke="#000" stroke-width="1"  shape-rendering="geometricPrecision"/>
<rect x="105.5" y="511.5" width="6.5" height="4" fill="#00ffff" stroke="#000" stroke-width="1" />
<path d="M48 637h2v10h-2z M115 637h1v10h-1zM50 641h3v2h-3z M57 640H115v1H57z M57 643H115v1H57z" fill="#00ffff" stroke="none"/>
<path d="M59 637h2v1h-2zM59 638h2v1h-2zM58 639h1v1h-1zM60 639h2v1h-2zM61 640h1v1h-1zM61 641h2v1h-2zM62 642h1v1h-1zM62 643h2v1h-2zM63 644h1v1h-1zM67 644h1v1h-1zM63 645h2v1h-2zM66 645h1v1h-1zM64 646h2v1h-2z" fill="#00ffff" stroke="none"/>
<path d="M71 637h2v1h-2zM71 638h2v1h-2zM70 639h1v1h-1zM72 639h2v1h-2zM73 640h1v1h-1zM73 641h2v1h-2zM74 642h1v1h-1zM74 643h2v1h-2zM75 644h1v1h-1zM79 644h1v1h-1zM75 645h2v1h-2zM78 645h1v1h-1zM76 646h2v1h-2z" fill="#00ffff" stroke="none"/>
<path d="M83 637h2v1h-2zM83 638h2v1h-2zM82 639h1v1h-1zM84 639h2v1h-2zM85 640h1v1h-1zM85 641h2v1h-2zM86 642h1v1h-1zM86 643h2v1h-2zM87 644h1v1h-1zM91 644h1v1h-1zM87 645h2v1h-2zM90 645h1v1h-1zM88 646h2v1h-2z" fill="#00ffff" stroke="none"/>
<path d="M95 637h2v1h-2zM95 638h2v1h-2zM94 639h1v1h-1zM96 639h2v1h-2zM97 640h1v1h-1zM97 641h2v1h-2zM98 642h1v1h-1zM98 643h2v1h-2zM99 644h1v1h-1zM103 644h1v1h-1zM99 645h2v1h-2zM102 645h1v1h-1zM100 646h2v1h-2z" fill="#00ffff" stroke="none"/>
<path d="M107 637h2v1h-2zM107 638h2v1h-2zM106 639h1v1h-1zM108 639h2v1h-2zM109 640h1v1h-1zM109 641h2v1h-2zM110 642h1v1h-1zM110 643h2v1h-2zM111 644h1v1h-1zM115 644h1v1h-1zM111 645h2v1h-2zM114 645h1v1h-1zM112 646h2v1h-2z" fill="#00ffff" stroke="none"/>
<circle cx="56.5" cy="642.5" r="3.2" fill="#00ffff" stroke="#000" stroke-width="1"  shape-rendering="geometricPrecision"/>
<rect x="106.5" y="632.5" width="6.5" height="4" fill="#00ffff" stroke="#000" stroke-width="1" />
<path d="M340 516h2v10h-2z M409 516h1v10h-1zM342 520h3v2h-3z M349 519H409v1H349z M349 522H409v1H349z" fill="#00ffff" stroke="none"/>
<path d="M351 516h2v1h-2zM351 517h2v1h-2zM350 518h1v1h-1zM352 518h2v1h-2zM353 519h1v1h-1zM353 520h2v1h-2zM354 521h1v1h-1zM354 522h2v1h-2zM355 523h1v1h-1zM359 523h1v1h-1zM355 524h2v1h-2zM358 524h1v1h-1zM356 525h2v1h-2z" fill="#00ffff" stroke="none"/>
<path d="M363 516h2v1h-2zM363 517h2v1h-2zM362 518h1v1h-1zM364 518h2v1h-2zM365 519h1v1h-1zM365 520h2v1h-2zM366 521h1v1h-1zM366 522h2v1h-2zM367 523h1v1h-1zM371 523h1v1h-1zM367 524h2v1h-2zM370 524h1v1h-1zM368 525h2v1h-2z" fill="#00ffff" stroke="none"/>
<path d="M375 516h2v1h-2zM375 517h2v1h-2zM374 518h1v1h-1zM376 518h2v1h-2zM377 519h1v1h-1zM377 520h2v1h-2zM378 521h1v1h-1zM378 522h2v1h-2zM379 523h1v1h-1zM383 523h1v1h-1zM379 524h2v1h-2zM382 524h1v1h-1zM380 525h2v1h-2z" fill="#00ffff" stroke="none"/>
<path d="M387 516h2v1h-2zM387 517h2v1h-2zM386 518h1v1h-1zM388 518h2v1h-2zM389 519h1v1h-1zM389 520h2v1h-2zM390 521h1v1h-1zM390 522h2v1h-2zM391 523h1v1h-1zM395 523h1v1h-1zM391 524h2v1h-2zM394 524h1v1h-1zM392 525h2v1h-2z" fill="#00ffff" stroke="none"/>
<path d="M399 516h2v1h-2zM399 517h2v1h-2zM398 518h1v1h-1zM400 518h2v1h-2zM401 519h1v1h-1zM401 520h2v1h-2zM402 521h1v1h-1zM402 522h2v1h-2zM403 523h1v1h-1zM407 523h1v1h-1zM403 524h2v1h-2zM406 524h1v1h-1zM404 525h2v1h-2z" fill="#00ffff" stroke="none"/>
<circle cx="346.5" cy="521" r="3.2" fill="#00ffff" stroke="#000" stroke-width="1"  shape-rendering="geometricPrecision"/>
<rect x="403" y="511.5" width="6.5" height="4" fill="#00ffff" stroke="#000" stroke-width="1" />
<path d="M435 638h2v10h-2z M470 638h1v10h-1zM437 642h3v2h-3z M444 641H470v1H444z M444 644H470v1H444z" fill="#00ffff" stroke="none"/>
<path d="M446 638h2v1h-2zM446 639h2v1h-2zM445 640h1v1h-1zM447 640h2v1h-2zM448 641h1v1h-1zM448 642h2v1h-2zM449 643h1v1h-1zM449 644h2v1h-2zM450 645h1v1h-1zM454 645h1v1h-1zM450 646h2v1h-2zM453 646h1v1h-1zM451 647h2v1h-2z" fill="#00ffff" stroke="none"/>
<path d="M458 638h2v1h-2zM458 639h2v1h-2zM457 640h1v1h-1zM459 640h2v1h-2zM460 641h1v1h-1zM460 642h2v1h-2zM461 643h1v1h-1zM461 644h2v1h-2zM462 645h1v1h-1zM466 645h1v1h-1zM462 646h2v1h-2zM465 646h1v1h-1zM463 647h2v1h-2z" fill="#00ffff" stroke="none"/>
<circle cx="442.5" cy="643" r="3.2" fill="#00ffff" stroke="#000" stroke-width="1"  shape-rendering="geometricPrecision"/>
<rect x="461" y="632.5" width="6.5" height="4" fill="#00ffff" stroke="#000" stroke-width="1" />
<path d="M574 576h2v10h-2z M655 576h1v10h-1zM576 580h3v2h-3z M583 579H655v1H583z M583 582H655v1H583z" fill="#00ffff" stroke="none"/>
<path d="M585 576h2v1h-2zM585 577h2v1h-2zM584 578h1v1h-1zM586 578h2v1h-2zM587 579h1v1h-1zM587 580h2v1h-2zM588 581h1v1h-1zM588 582h2v1h-2zM589 583h1v1h-1zM593 583h1v1h-1zM589 584h2v1h-2zM592 584h1v1h-1zM590 585h2v1h-2z" fill="#00ffff" stroke="none"/>
<path d="M597 576h2v1h-2zM597 577h2v1h-2zM596 578h1v1h-1zM598 578h2v1h-2zM599 579h1v1h-1zM599 580h2v1h-2zM600 581h1v1h-1zM600 582h2v1h-2zM601 583h1v1h-1zM605 583h1v1h-1zM601 584h2v1h-2zM604 584h1v1h-1zM602 585h2v1h-2z" fill="#00ffff" stroke="none"/>
<path d="M609 576h2v1h-2zM609 577h2v1h-2zM608 578h1v1h-1zM610 578h2v1h-2zM611 579h1v1h-1zM611 580h2v1h-2zM612 581h1v1h-1zM612 582h2v1h-2zM613 583h1v1h-1zM617 583h1v1h-1zM613 584h2v1h-2zM616 584h1v1h-1zM614 585h2v1h-2z" fill="#00ffff" stroke="none"/>
<path d="M621 576h2v1h-2zM621 577h2v1h-2zM620 578h1v1h-1zM622 578h2v1h-2zM623 579h1v1h-1zM623 580h2v1h-2zM624 581h1v1h-1zM624 582h2v1h-2zM625 583h1v1h-1zM629 583h1v1h-1zM625 584h2v1h-2zM628 584h1v1h-1zM626 585h2v1h-2z" fill="#00ffff" stroke="none"/>
<path d="M633 576h2v1h-2zM633 577h2v1h-2zM632 578h1v1h-1zM634 578h2v1h-2zM635 579h1v1h-1zM635 580h2v1h-2zM636 581h1v1h-1zM636 582h2v1h-2zM637 583h1v1h-1zM641 583h1v1h-1zM637 584h2v1h-2zM640 584h1v1h-1zM638 585h2v1h-2z" fill="#00ffff" stroke="none"/>
<path d="M645 576h2v1h-2zM645 577h2v1h-2zM644 578h1v1h-1zM646 578h2v1h-2zM647 579h1v1h-1zM647 580h2v1h-2zM648 581h1v1h-1zM648 582h2v1h-2zM649 583h1v1h-1zM653 583h1v1h-1zM649 584h2v1h-2zM652 584h1v1h-1zM650 585h2v1h-2z" fill="#00ffff" stroke="none"/>
<circle cx="579.5" cy="580.5" r="3.2" fill="#00ffff" stroke="#000" stroke-width="1"  shape-rendering="geometricPrecision"/>
<rect x="647" y="571" width="6.5" height="4" fill="#00ffff" stroke="#000" stroke-width="1" />
<path d="M686 576h2v10h-2z M722 576h1v10h-1zM688 580h3v2h-3z M695 579H722v1H695z M695 582H722v1H695z" fill="#00ffff" stroke="none"/>
<path d="M697 576h2v1h-2zM697 577h2v1h-2zM696 578h1v1h-1zM698 578h2v1h-2zM699 579h1v1h-1zM699 580h2v1h-2zM700 581h1v1h-1zM700 582h2v1h-2zM701 583h1v1h-1zM705 583h1v1h-1zM701 584h2v1h-2zM704 584h1v1h-1zM702 585h2v1h-2z" fill="#00ffff" stroke="none"/>
<path d="M709 576h2v1h-2zM709 577h2v1h-2zM708 578h1v1h-1zM710 578h2v1h-2zM711 579h1v1h-1zM711 580h2v1h-2zM712 581h1v1h-1zM712 582h2v1h-2zM713 583h1v1h-1zM717 583h1v1h-1zM713 584h2v1h-2zM716 584h1v1h-1zM714 585h2v1h-2z" fill="#00ffff" stroke="none"/>
<circle cx="690.5" cy="580.5" r="3.2" fill="#00ffff" stroke="#000" stroke-width="1"  shape-rendering="geometricPrecision"/>
<rect x="713.5" y="570.5" width="6.5" height="4" fill="#00ffff" stroke="#000" stroke-width="1" />
<path d="M903 560h2v10h-2z M938 560h1v10h-1zM905 564h3v2h-3z M912 563H938v1H912z M912 566H938v1H912z" fill="#00ffff" stroke="none"/>
<path d="M914 560h2v1h-2zM914 561h2v1h-2zM913 562h1v1h-1zM915 562h2v1h-2zM916 563h1v1h-1zM916 564h2v1h-2zM917 565h1v1h-1zM917 566h2v1h-2zM918 567h1v1h-1zM922 567h1v1h-1zM918 568h2v1h-2zM921 568h1v1h-1zM919 569h2v1h-2z" fill="#00ffff" stroke="none"/>
<path d="M926 560h2v1h-2zM926 561h2v1h-2zM925 562h1v1h-1zM927 562h2v1h-2zM928 563h1v1h-1zM928 564h2v1h-2zM929 565h1v1h-1zM929 566h2v1h-2zM930 567h1v1h-1zM934 567h1v1h-1zM930 568h2v1h-2zM933 568h1v1h-1zM931 569h2v1h-2z" fill="#00ffff" stroke="none"/>
<circle cx="909.5" cy="565" r="3.2" fill="#00ffff" stroke="#000" stroke-width="1"  shape-rendering="geometricPrecision"/>
<rect x="929.5" y="555.5" width="6.5" height="4" fill="#00ffff" stroke="#000" stroke-width="1" />
<circle cx="580.5" cy="556.5" r="6" fill="#00ffff" stroke="#000" stroke-width="1"  shape-rendering="geometricPrecision"/>
<polyline points="576.5,552.5 584.5,560.5" fill="none" stroke="#000" stroke-width="1" />
<polyline points="576.5,560.5 584.5,552.5" fill="none" stroke="#000" stroke-width="1" />
<circle cx="594.5" cy="556.5" r="6" fill="#00ffff" stroke="#000" stroke-width="1"  shape-rendering="geometricPrecision"/>
<polyline points="590.5,552.5 598.5,560.5" fill="none" stroke="#000" stroke-width="1" />
<polyline points="590.5,560.5 598.5,552.5" fill="none" stroke="#000" stroke-width="1" />
<circle cx="608.5" cy="556.5" r="6" fill="#00ffff" stroke="#000" stroke-width="1"  shape-rendering="geometricPrecision"/>
<polyline points="604.5,552.5 612.5,560.5" fill="none" stroke="#000" stroke-width="1" />
<polyline points="604.5,560.5 612.5,552.5" fill="none" stroke="#000" stroke-width="1" />
<circle cx="622.5" cy="556.5" r="6" fill="#00ffff" stroke="#000" stroke-width="1"  shape-rendering="geometricPrecision"/>
<polyline points="618.5,552.5 626.5,560.5" fill="none" stroke="#000" stroke-width="1" />
<polyline points="618.5,560.5 626.5,552.5" fill="none" stroke="#000" stroke-width="1" />
<circle cx="636.5" cy="556.5" r="6" fill="#00ffff" stroke="#000" stroke-width="1"  shape-rendering="geometricPrecision"/>
<polyline points="632.5,552.5 640.5,560.5" fill="none" stroke="#000" stroke-width="1" />
<polyline points="632.5,560.5 640.5,552.5" fill="none" stroke="#000" stroke-width="1" />
<circle cx="650.5" cy="556.5" r="6" fill="#00ffff" stroke="#000" stroke-width="1"  shape-rendering="geometricPrecision"/>
<circle cx="650.5" cy="556.5" r="3.2" fill="#00ffff" stroke="#000" stroke-width="1"  shape-rendering="geometricPrecision"/>
<circle cx="689.5" cy="557.5" r="6" fill="#00ffff" stroke="#000" stroke-width="1"  shape-rendering="geometricPrecision"/>
<polyline points="685.5,553.5 693.5,561.5" fill="none" stroke="#000" stroke-width="1" />
<polyline points="685.5,561.5 693.5,553.5" fill="none" stroke="#000" stroke-width="1" />
<circle cx="703.5" cy="557.5" r="6" fill="#00ffff" stroke="#000" stroke-width="1"  shape-rendering="geometricPrecision"/>
<polyline points="699.5,553.5 707.5,561.5" fill="none" stroke="#000" stroke-width="1" />
<polyline points="699.5,561.5 707.5,553.5" fill="none" stroke="#000" stroke-width="1" />
<circle cx="717.5" cy="557.5" r="6" fill="#00ffff" stroke="#000" stroke-width="1"  shape-rendering="geometricPrecision"/>
<circle cx="717.5" cy="557.5" r="4" fill="none" stroke="#000" stroke-width="1"  shape-rendering="geometricPrecision"/>
<rect x="715.5" y="555.5" width="4" height="4" fill="#00ffff" stroke="#000" stroke-width="1" />
<circle cx="259.5" cy="604.5" r="7" fill="#00ffff" stroke="#000" stroke-width="1"  shape-rendering="geometricPrecision"/>
<circle cx="259.5" cy="604.5" r="3.5" fill="#00ffff" stroke="#000" stroke-width="1"  shape-rendering="geometricPrecision"/>
<polyline points="254.5,599.5 257,602" fill="none" stroke="#000" stroke-width="1" />
<polyline points="264.5,609.5 262,607" fill="none" stroke="#000" stroke-width="1" />
<polyline points="254.5,609.5 257,607" fill="none" stroke="#000" stroke-width="1" />
<polyline points="264.5,599.5 262,602" fill="none" stroke="#000" stroke-width="1" />
<rect x="587" y="556" width="1" height="1" fill="#fff" stroke="none" stroke-width="1" />
<rect x="601" y="556" width="1" height="1" fill="#fff" stroke="none" stroke-width="1" />
<rect x="615" y="556" width="1" height="1" fill="#fff" stroke="none" stroke-width="1" />
<rect x="629" y="556" width="1" height="1" fill="#fff" stroke="none" stroke-width="1" />
<rect x="643" y="556" width="1" height="1" fill="#fff" stroke="none" stroke-width="1" />
<rect x="696" y="557" width="1" height="1" fill="#fff" stroke="none" stroke-width="1" />
<rect x="710" y="557" width="1" height="1" fill="#fff" stroke="none" stroke-width="1" />
<rect x="192.5" y="209.5" width="20" height="24.5" fill="#52c4c4" stroke="none" stroke-width="1" />
<polygon points="192.5,234 212.5,234 206,247 199,247" fill="#3e9a9a" stroke="none" stroke-width="1" />
<polygon points="192.5,209.5 212.5,209.5 212.5,234 206,247 199,247 192.5,234" fill="none" stroke="#000" stroke-width="1" />
<rect x="199.5" y="213.5" width="6" height="4" fill="#00ffff" stroke="#000" stroke-width="1" />
<rect x="199.5" y="226.5" width="6" height="4" fill="#00ffff" stroke="#000" stroke-width="1" />
<rect x="185" y="247" width="6" height="25.5" fill="#5aaeb0" stroke="none" stroke-width="1" />
<rect x="191.5" y="247.5" width="21" height="47.5" fill="#008080" stroke="#000" stroke-width="1" />
<rect x="191.5" y="247.5" width="21" height="25.5" fill="#00ffff" stroke="#000" stroke-width="1" />
<rect x="193.5" y="250" width="17" height="21" fill="#00ffff" stroke="#000" stroke-width="1" />
<rect x="195.5" y="259.5" width="12" height="11" fill="#00ffff" stroke="#000" stroke-width="1" />
<rect x="195.5" y="262.5" width="1" height="1.5" fill="#000" stroke="none" stroke-width="1" />
<rect x="207.5" y="262.5" width="1" height="1.5" fill="#000" stroke="none" stroke-width="1" />
<rect x="195.5" y="266.5" width="1" height="1.5" fill="#000" stroke="none" stroke-width="1" />
<rect x="207.5" y="266.5" width="1" height="1.5" fill="#000" stroke="none" stroke-width="1" />
<rect x="191.5" y="273" width="2" height="22" fill="#00ffff" stroke="#000" stroke-width="1" />
<rect x="210.5" y="273" width="2" height="22" fill="#00ffff" stroke="#000" stroke-width="1" />
<polyline points="191.5,275 212.5,275" fill="none" stroke="#000" stroke-width="1" />
<polygon points="194.5,275.5 210,275.5 204.5,283.5 200,283.5" fill="#00ffff" stroke="#000" stroke-width="1" />
<rect x="201" y="279" width="2.5" height="2.5" fill="#000" stroke="none" stroke-width="1" />
<rect x="199.5" y="284.5" width="5.5" height="2.5" fill="#00ffff" stroke="#000" stroke-width="1" />
<rect x="192.5" y="295.5" width="20" height="24.5" fill="#52c4c4" stroke="none" stroke-width="1" />
<polygon points="192.5,320 212.5,320 206,333 199.5,333" fill="#3e9a9a" stroke="none" stroke-width="1" />
<polygon points="192.5,295.5 212.5,295.5 212.5,320 206,333 199.5,333 192.5,320" fill="none" stroke="#000" stroke-width="1" />
<rect x="199.5" y="312.5" width="6" height="4" fill="#00ffff" stroke="#000" stroke-width="1" />
<rect x="811.5" y="268.5" width="20" height="24.5" fill="#52c4c4" stroke="none" stroke-width="1" />
<polygon points="811.5,293 831.5,293 825,306 818,306" fill="#3e9a9a" stroke="none" stroke-width="1" />
<polygon points="811.5,268.5 831.5,268.5 831.5,293 825,306 818,306 811.5,293" fill="none" stroke="#000" stroke-width="1" />
<rect x="818.5" y="272.5" width="6" height="4" fill="#00ffff" stroke="#000" stroke-width="1" />
<rect x="818.5" y="285.5" width="6" height="4" fill="#00ffff" stroke="#000" stroke-width="1" />
<rect x="831.5" y="306" width="6" height="25.5" fill="#5aaeb0" stroke="none" stroke-width="1" />
<rect x="810.5" y="306.5" width="21" height="47.5" fill="#008080" stroke="#000" stroke-width="1" />
<rect x="810.5" y="306.5" width="21" height="25.5" fill="#00ffff" stroke="#000" stroke-width="1" />
<rect x="812.5" y="309" width="17" height="21" fill="#00ffff" stroke="#000" stroke-width="1" />
<rect x="814.5" y="318.5" width="12" height="11" fill="#00ffff" stroke="#000" stroke-width="1" />
<rect x="814.5" y="321.5" width="1" height="1.5" fill="#000" stroke="none" stroke-width="1" />
<rect x="826.5" y="321.5" width="1" height="1.5" fill="#000" stroke="none" stroke-width="1" />
<rect x="814.5" y="325.5" width="1" height="1.5" fill="#000" stroke="none" stroke-width="1" />
<rect x="826.5" y="325.5" width="1" height="1.5" fill="#000" stroke="none" stroke-width="1" />
<rect x="810.5" y="332" width="2" height="22" fill="#00ffff" stroke="#000" stroke-width="1" />
<rect x="829.5" y="332" width="2" height="22" fill="#00ffff" stroke="#000" stroke-width="1" />
<polyline points="810.5,334 831.5,334" fill="none" stroke="#000" stroke-width="1" />
<polygon points="813.5,334.5 829,334.5 823.5,342.5 819,342.5" fill="#00ffff" stroke="#000" stroke-width="1" />
<rect x="820" y="338" width="2.5" height="2.5" fill="#000" stroke="none" stroke-width="1" />
<rect x="818.5" y="343.5" width="5.5" height="2.5" fill="#00ffff" stroke="#000" stroke-width="1" />
<rect x="811.5" y="354.5" width="20" height="24.5" fill="#52c4c4" stroke="none" stroke-width="1" />
<polygon points="811.5,379 831.5,379 825,392 818.5,392" fill="#3e9a9a" stroke="none" stroke-width="1" />
<polygon points="811.5,354.5 831.5,354.5 831.5,379 825,392 818.5,392 811.5,379" fill="none" stroke="#000" stroke-width="1" />
<rect x="818.5" y="371.5" width="6" height="4" fill="#00ffff" stroke="#000" stroke-width="1" />
<rect x="216.5" y="276.5" width="37" height="14" fill="#00ffff" stroke="#000" stroke-width="1" />
<rect x="216" y="296" width="61" height="17" fill="#ece9d8" stroke="none" stroke-width="1" />
<rect x="216" y="296" width="61" height="1" fill="#b8b4a4" stroke="none" stroke-width="1" />
<rect x="216" y="296" width="1" height="17" fill="#b8b4a4" stroke="none" stroke-width="1" />
<rect x="216" y="312" width="61" height="1" fill="#ffffff" stroke="none" stroke-width="1" />
<rect x="276" y="296" width="1" height="17" fill="#ffffff" stroke="none" stroke-width="1" />
<rect x="836.5" y="346.5" width="46.5" height="14" fill="#00ffff" stroke="#000" stroke-width="1" />
<rect x="836" y="364" width="61.5" height="17" fill="#ece9d8" stroke="none" stroke-width="1" />
<rect x="836" y="364" width="61.5" height="1" fill="#b8b4a4" stroke="none" stroke-width="1" />
<rect x="836" y="364" width="1" height="17" fill="#b8b4a4" stroke="none" stroke-width="1" />
<rect x="836" y="380" width="61.5" height="1" fill="#ffffff" stroke="none" stroke-width="1" />
<rect x="896.5" y="364" width="1" height="17" fill="#ffffff" stroke="none" stroke-width="1" />
<rect x="784" y="405" width="73" height="24.5" fill="#ece9d8" stroke="none" stroke-width="1" />
<rect x="784" y="405" width="73" height="1" fill="#ffffff" stroke="none" stroke-width="1" />
<rect x="784" y="405" width="1" height="24.5" fill="#ffffff" stroke="none" stroke-width="1" />
<rect x="784" y="428.5" width="73" height="1" fill="#7c7c74" stroke="none" stroke-width="1" />
<rect x="856" y="405" width="1" height="24.5" fill="#7c7c74" stroke="none" stroke-width="1" />
<rect x="785" y="427.5" width="71" height="1" fill="#b4b0a0" stroke="none" stroke-width="1" />
<rect x="855" y="406" width="1" height="22.5" fill="#b4b0a0" stroke="none" stroke-width="1" />
<rect x="269.5" y="217.5" width="5" height="4" fill="#00ffff" stroke="#000" stroke-width="1" />
<polygon points="266.5,221.5 279.5,221.5 276.5,228 276.5,273.5 266.5,273.5" fill="#00ffff" stroke="#000" stroke-width="1" />
<polygon points="277,229.5 307.5,234.5 307.5,253.5 277,253.5" fill="#00ffff" stroke="#000" stroke-width="1" />
<rect x="280.5" y="228" width="5" height="2.5" fill="#000" stroke="none" stroke-width="1" />
<rect x="298" y="231" width="5" height="2.5" fill="#000" stroke="none" stroke-width="1" />
<rect x="278.5" y="253.5" width="21" height="3" fill="#00ffff" stroke="#000" stroke-width="1" />
<rect x="302.5" y="254" width="3" height="2.5" fill="#00ffff" stroke="#000" stroke-width="1" />
<rect x="307.5" y="221" width="9" height="52.5" fill="#00ffff" stroke="#000" stroke-width="1" />
<rect x="308.5" y="217.5" width="7" height="3.5" fill="#00ffff" stroke="#000" stroke-width="1" />
<polyline points="308.5,219.3 315.5,219.3" fill="none" stroke="#000" stroke-width="1" />
<polyline points="307.5,268 316.5,268" fill="none" stroke="#000" stroke-width="1" />
<rect x="305" y="241" width="5" height="8.5" fill="#00ffff" stroke="#000" stroke-width="2" />
<rect x="304.5" y="261.5" width="3.5" height="9" fill="#00ffff" stroke="#000" stroke-width="1.6" />
<path d="M318.5 273.5V258.5H328.5V249.5A7.5 7.5 0 0 1 343.5 249.5V273.5Z" fill="#00ffff" stroke="#000" stroke-width="1" shape-rendering="auto"/>
<circle cx="336" cy="251" r="1.4" fill="#00ffff" stroke="#000" stroke-width="1" shape-rendering="auto"/>
<path d="M536.5 406.5V391.5H546.5V382.5A7.5 7.5 0 0 1 561.5 382.5V406.5Z" fill="#00ffff" stroke="#000" stroke-width="1" shape-rendering="auto"/>
<circle cx="554" cy="384" r="1.4" fill="#00ffff" stroke="#000" stroke-width="1" shape-rendering="auto"/>
<path d="M778.5 270.5V255.5H788.5V246.5A7.5 7.5 0 0 1 803.5 246.5V270.5Z" fill="#00ffff" stroke="#000" stroke-width="1" shape-rendering="auto"/>
<circle cx="796" cy="248" r="1.4" fill="#00ffff" stroke="#000" stroke-width="1" shape-rendering="auto"/>
<rect x="796" y="271" width="1" height="3" fill="#fff" stroke="none" stroke-width="1" />
<rect x="793" y="273.5" width="6.5" height="4" fill="#00ffff" stroke="#000" stroke-width="1" />
<polygon points="344.5,332.5 376,332.5 376,348.5 375,365.5 345.5,365.5 344.5,348.5" fill="#00cccc" stroke="#000" stroke-width="1" />
<rect x="344.5" y="332.5" width="31.5" height="2" fill="#00ffff" stroke="#000" stroke-width="1" />
<polyline points="343.5,332.5 377.5,332.5" fill="none" stroke="#000" stroke-width="1" />
<polyline points="343.5,348.5 377.5,348.5" fill="none" stroke="#000" stroke-width="1" />
<rect x="353.5" y="337.5" width="2.5" height="8" fill="#00ffff" stroke="#000" stroke-width="1" />
<rect x="365.5" y="337.5" width="2.5" height="8" fill="#00ffff" stroke="#000" stroke-width="1" />
<rect x="353.5" y="350.5" width="2.5" height="8" fill="#00ffff" stroke="#000" stroke-width="1" />
<rect x="365.5" y="350.5" width="2.5" height="8" fill="#00ffff" stroke="#000" stroke-width="1" />
<rect x="339.5" y="364" width="42" height="8" fill="#00cccc" stroke="#000" stroke-width="1" />
<polyline points="339.5,364 339.5,362" fill="none" stroke="#000" stroke-width="1" />
<polyline points="381.5,364 381.5,362" fill="none" stroke="#000" stroke-width="1" />
<polyline points="346,364 346,367.5 347.5,367.5 347.5,366 350,366 350,367.5 351.5,367.5 351.5,364 352.5,362" fill="none" stroke="#000" stroke-width="1" />
<polyline points="353.5,364 353.5,367.5 355,367.5 355,366 357.5,366 357.5,367.5 359,367.5 359,364 360,362" fill="none" stroke="#000" stroke-width="1" />
<polyline points="361,364 361,367.5 362.5,367.5 362.5,366 365,366 365,367.5 366.5,367.5 366.5,364 367.5,362" fill="none" stroke="#000" stroke-width="1" />
<polyline points="368.5,364 368.5,367.5 370,367.5 370,366 372.5,366 372.5,367.5 374,367.5 374,364 375,362" fill="none" stroke="#000" stroke-width="1" />
<rect x="338.5" y="372" width="44" height="34.5" fill="#00cccc" stroke="#000" stroke-width="1" />
<polyline points="347,377 351,377" fill="none" stroke="#000" stroke-width="1" />
<polyline points="352.5,377 356,377" fill="none" stroke="#000" stroke-width="1" />
<polyline points="364.5,377 368,377" fill="none" stroke="#000" stroke-width="1" />
<polyline points="369.5,377 373.5,377" fill="none" stroke="#000" stroke-width="1" />
<rect x="357.5" y="375" width="5" height="3.5" fill="#00ffff" stroke="#000" stroke-width="1" />
<rect x="338.5" y="380" width="44" height="4.5" fill="#00ffff" stroke="#000" stroke-width="1" />
<rect x="338.5" y="384.5" width="44" height="3" fill="#00ffff" stroke="#000" stroke-width="1" />
<rect x="338.5" y="393.5" width="44" height="4" fill="#00ffff" stroke="#000" stroke-width="1" />
<polygon points="338.5,393.5 345,400.5 345,402.5 338.5,402.5" fill="#00cccc" stroke="#000" stroke-width="1" />
<polygon points="382.5,393.5 376,400.5 376,402.5 382.5,402.5" fill="#00cccc" stroke="#000" stroke-width="1" />
<polygon points="344.5,397.5 376.5,397.5 375,402.5 346.5,402.5" fill="#00ffff" stroke="#000" stroke-width="1" />
<rect x="338.5" y="402.5" width="44" height="4" fill="#00cccc" stroke="#000" stroke-width="1" />
<polygon points="392.5,332.5 424,332.5 424,348.5 423,365.5 393.5,365.5 392.5,348.5" fill="#00cccc" stroke="#000" stroke-width="1" />
<rect x="392.5" y="332.5" width="31.5" height="2" fill="#00ffff" stroke="#000" stroke-width="1" />
<polyline points="391.5,332.5 425.5,332.5" fill="none" stroke="#000" stroke-width="1" />
<polyline points="391.5,348.5 425.5,348.5" fill="none" stroke="#000" stroke-width="1" />
<rect x="401.5" y="337.5" width="2.5" height="8" fill="#00ffff" stroke="#000" stroke-width="1" />
<rect x="413.5" y="337.5" width="2.5" height="8" fill="#00ffff" stroke="#000" stroke-width="1" />
<rect x="401.5" y="350.5" width="2.5" height="8" fill="#00ffff" stroke="#000" stroke-width="1" />
<rect x="413.5" y="350.5" width="2.5" height="8" fill="#00ffff" stroke="#000" stroke-width="1" />
<rect x="406.5" y="338.5" width="5" height="4" fill="#00ffff" stroke="#000" stroke-width="1" />
<rect x="406.5" y="354.5" width="5" height="4" fill="#00ffff" stroke="#000" stroke-width="1" />
<rect x="387.5" y="364" width="42" height="8" fill="#00cccc" stroke="#000" stroke-width="1" />
<polyline points="387.5,364 387.5,362" fill="none" stroke="#000" stroke-width="1" />
<polyline points="429.5,364 429.5,362" fill="none" stroke="#000" stroke-width="1" />
<polyline points="394,364 394,367.5 395.5,367.5 395.5,366 398,366 398,367.5 399.5,367.5 399.5,364 400.5,362" fill="none" stroke="#000" stroke-width="1" />
<polyline points="401.5,364 401.5,367.5 403,367.5 403,366 405.5,366 405.5,367.5 407,367.5 407,364 408,362" fill="none" stroke="#000" stroke-width="1" />
<polyline points="409,364 409,367.5 410.5,367.5 410.5,366 413,366 413,367.5 414.5,367.5 414.5,364 415.5,362" fill="none" stroke="#000" stroke-width="1" />
<polyline points="416.5,364 416.5,367.5 418,367.5 418,366 420.5,366 420.5,367.5 422,367.5 422,364 423,362" fill="none" stroke="#000" stroke-width="1" />
<rect x="386.5" y="372" width="44" height="34.5" fill="#00cccc" stroke="#000" stroke-width="1" />
<polyline points="395,377 399,377" fill="none" stroke="#000" stroke-width="1" />
<polyline points="400.5,377 404,377" fill="none" stroke="#000" stroke-width="1" />
<polyline points="412.5,377 416,377" fill="none" stroke="#000" stroke-width="1" />
<polyline points="417.5,377 421.5,377" fill="none" stroke="#000" stroke-width="1" />
<rect x="405.5" y="375" width="5" height="3.5" fill="#00ffff" stroke="#000" stroke-width="1" />
<rect x="386.5" y="380" width="44" height="4.5" fill="#00ffff" stroke="#000" stroke-width="1" />
<rect x="386.5" y="384.5" width="44" height="3" fill="#00ffff" stroke="#000" stroke-width="1" />
<rect x="386.5" y="393.5" width="44" height="4" fill="#00ffff" stroke="#000" stroke-width="1" />
<polygon points="386.5,393.5 393,400.5 393,402.5 386.5,402.5" fill="#00cccc" stroke="#000" stroke-width="1" />
<polygon points="430.5,393.5 424,400.5 424,402.5 430.5,402.5" fill="#00cccc" stroke="#000" stroke-width="1" />
<polygon points="392.5,397.5 424.5,397.5 423,402.5 394.5,402.5" fill="#00ffff" stroke="#000" stroke-width="1" />
<rect x="386.5" y="402.5" width="44" height="4" fill="#00cccc" stroke="#000" stroke-width="1" />
<polygon points="440.5,332.5 472,332.5 472,348.5 471,365.5 441.5,365.5 440.5,348.5" fill="#00cccc" stroke="#000" stroke-width="1" />
<rect x="440.5" y="332.5" width="31.5" height="2" fill="#00ffff" stroke="#000" stroke-width="1" />
<polyline points="439.5,332.5 473.5,332.5" fill="none" stroke="#000" stroke-width="1" />
<polyline points="439.5,348.5 473.5,348.5" fill="none" stroke="#000" stroke-width="1" />
<rect x="449.5" y="337.5" width="2.5" height="8" fill="#00ffff" stroke="#000" stroke-width="1" />
<rect x="461.5" y="337.5" width="2.5" height="8" fill="#00ffff" stroke="#000" stroke-width="1" />
<rect x="449.5" y="350.5" width="2.5" height="8" fill="#00ffff" stroke="#000" stroke-width="1" />
<rect x="461.5" y="350.5" width="2.5" height="8" fill="#00ffff" stroke="#000" stroke-width="1" />
<rect x="454.5" y="338.5" width="5" height="4" fill="#00ffff" stroke="#000" stroke-width="1" />
<rect x="454.5" y="354.5" width="5" height="4" fill="#00ffff" stroke="#000" stroke-width="1" />
<rect x="435.5" y="364" width="42" height="8" fill="#00cccc" stroke="#000" stroke-width="1" />
<polyline points="435.5,364 435.5,362" fill="none" stroke="#000" stroke-width="1" />
<polyline points="477.5,364 477.5,362" fill="none" stroke="#000" stroke-width="1" />
<polyline points="442,364 442,367.5 443.5,367.5 443.5,366 446,366 446,367.5 447.5,367.5 447.5,364 448.5,362" fill="none" stroke="#000" stroke-width="1" />
<polyline points="449.5,364 449.5,367.5 451,367.5 451,366 453.5,366 453.5,367.5 455,367.5 455,364 456,362" fill="none" stroke="#000" stroke-width="1" />
<polyline points="457,364 457,367.5 458.5,367.5 458.5,366 461,366 461,367.5 462.5,367.5 462.5,364 463.5,362" fill="none" stroke="#000" stroke-width="1" />
<polyline points="464.5,364 464.5,367.5 466,367.5 466,366 468.5,366 468.5,367.5 470,367.5 470,364 471,362" fill="none" stroke="#000" stroke-width="1" />
<rect x="434.5" y="372" width="44" height="34.5" fill="#00cccc" stroke="#000" stroke-width="1" />
<polyline points="443,377 447,377" fill="none" stroke="#000" stroke-width="1" />
<polyline points="448.5,377 452,377" fill="none" stroke="#000" stroke-width="1" />
<polyline points="460.5,377 464,377" fill="none" stroke="#000" stroke-width="1" />
<polyline points="465.5,377 469.5,377" fill="none" stroke="#000" stroke-width="1" />
<rect x="453.5" y="375" width="5" height="3.5" fill="#00ffff" stroke="#000" stroke-width="1" />
<rect x="434.5" y="380" width="44" height="4.5" fill="#00ffff" stroke="#000" stroke-width="1" />
<rect x="434.5" y="384.5" width="44" height="3" fill="#00ffff" stroke="#000" stroke-width="1" />
<rect x="434.5" y="393.5" width="44" height="4" fill="#00ffff" stroke="#000" stroke-width="1" />
<polygon points="434.5,393.5 441,400.5 441,402.5 434.5,402.5" fill="#00cccc" stroke="#000" stroke-width="1" />
<polygon points="478.5,393.5 472,400.5 472,402.5 478.5,402.5" fill="#00cccc" stroke="#000" stroke-width="1" />
<polygon points="440.5,397.5 472.5,397.5 471,402.5 442.5,402.5" fill="#00ffff" stroke="#000" stroke-width="1" />
<rect x="434.5" y="402.5" width="44" height="4" fill="#00cccc" stroke="#000" stroke-width="1" />
<rect x="488.5" y="374.5" width="6" height="27.5" fill="#00ffff" stroke="#000" stroke-width="1" />
<rect x="528.5" y="388.5" width="3" height="18" fill="#00ffff" stroke="#000" stroke-width="1" />
<polygon points="502,389 521.5,389 514.5,400 514.5,402 510.5,402 510.5,400" fill="#00ffff" stroke="#000" stroke-width="1" />
<path d="M491.5 406.5V393.5Q491.5 389.5 495.5 389.5H497.5V406.5Z" fill="#00ffff" stroke="#000" shape-rendering="auto"/>
<polygon points="497.5,397 499,395.5 504.5,395.5 506.5,397.5 506.5,402.5 504.5,404.5 497.5,404.5" fill="#00ffff" stroke="#000" stroke-width="1" />
<circle cx="499" cy="394" r="1.4" fill="#00ffff" stroke="#000" stroke-width="1" shape-rendering="auto"/>
<rect x="495.5" y="368.5" width="4" height="3" fill="#00ffff" stroke="#000" stroke-width="1" />
<rect x="494.5" y="371.5" width="37" height="17" fill="#00ffff" stroke="#000" stroke-width="1" />
<rect x="500.5" y="374.5" width="24" height="11" fill="#00ffff" stroke="#000" stroke-width="1" />
<rect x="531.5" y="377.5" width="2" height="5" fill="#00ffff" stroke="#000" stroke-width="1" />
<rect x="730.5" y="222.5" width="6" height="27.5" fill="#00ffff" stroke="#000" stroke-width="1" />
<rect x="770.5" y="236.5" width="3" height="18" fill="#00ffff" stroke="#000" stroke-width="1" />
<polygon points="744,237 763.5,237 756.5,248 756.5,250 752.5,250 752.5,248" fill="#00ffff" stroke="#000" stroke-width="1" />
<path d="M733.5 254.5V241.5Q733.5 237.5 737.5 237.5H739.5V254.5Z" fill="#00ffff" stroke="#000" shape-rendering="auto"/>
<polygon points="739.5,245 741,243.5 746.5,243.5 748.5,245.5 748.5,250.5 746.5,252.5 739.5,252.5" fill="#00ffff" stroke="#000" stroke-width="1" />
<circle cx="741" cy="242" r="1.4" fill="#00ffff" stroke="#000" stroke-width="1" shape-rendering="auto"/>
<rect x="737.5" y="216.5" width="4" height="3" fill="#00ffff" stroke="#000" stroke-width="1" />
<rect x="736.5" y="219.5" width="37" height="17" fill="#00ffff" stroke="#000" stroke-width="1" />
<rect x="742.5" y="222.5" width="24" height="11" fill="#00ffff" stroke="#000" stroke-width="1" />
<rect x="773.5" y="225.5" width="2" height="5" fill="#00ffff" stroke="#000" stroke-width="1" />
<polygon points="227.5,410.5 237.5,410.5 237.5,414 239,414 239,424 237.5,424 237.5,431 227.5,431" fill="#00ffff" stroke="#000" stroke-width="1" />
<polyline points="227.5,412.5 237.5,412.5" fill="none" stroke="#000" stroke-width="1" />
<polyline points="227.5,414.6 238,414.6" fill="none" stroke="#000" stroke-width="1" />
<polyline points="227.5,416.7 238,416.7" fill="none" stroke="#000" stroke-width="1" />
<polyline points="227.5,418.8 238,418.8" fill="none" stroke="#000" stroke-width="1" />
<polyline points="227.5,420.9 238,420.9" fill="none" stroke="#000" stroke-width="1" />
<polyline points="227.5,423 238,423" fill="none" stroke="#000" stroke-width="1" />
<polyline points="227.5,425.1 237.5,425.1" fill="none" stroke="#000" stroke-width="1" />
<polyline points="227.5,427.2 237.5,427.2" fill="none" stroke="#000" stroke-width="1" />
<polyline points="227.5,429.3 237.5,429.3" fill="none" stroke="#000" stroke-width="1" />
<path d="M227.5 414.5H218A4.5 5 0 0 0 218 424.5H227.5Z" fill="#00ffff" stroke="#000" shape-rendering="auto"/>
<polyline points="218.5,414.5 218.5,424.5" fill="none" stroke="#000" stroke-width="1" />
<rect x="218.5" y="424.5" width="9" height="10" fill="#00ffff" stroke="#000" stroke-width="1" />
<rect x="213.5" y="434.5" width="24" height="4" fill="#00ffff" stroke="#000" stroke-width="1" />
<polygon points="295,529.5 285,529.5 285,533 283.5,533 283.5,543 285,543 285,550 295,550" fill="#00ffff" stroke="#000" stroke-width="1" />
<polyline points="295,531.5 285,531.5" fill="none" stroke="#000" stroke-width="1" />
<polyline points="295,533.6 284.5,533.6" fill="none" stroke="#000" stroke-width="1" />
<polyline points="295,535.7 284.5,535.7" fill="none" stroke="#000" stroke-width="1" />
<polyline points="295,537.8 284.5,537.8" fill="none" stroke="#000" stroke-width="1" />
<polyline points="295,539.9 284.5,539.9" fill="none" stroke="#000" stroke-width="1" />
<polyline points="295,542 284.5,542" fill="none" stroke="#000" stroke-width="1" />
<polyline points="295,544.1 285,544.1" fill="none" stroke="#000" stroke-width="1" />
<polyline points="295,546.2 285,546.2" fill="none" stroke="#000" stroke-width="1" />
<polyline points="295,548.3 285,548.3" fill="none" stroke="#000" stroke-width="1" />
<path d="M295 533.5H304.5A4.5 5 0 0 1 304.5 543.5H295Z" fill="#00ffff" stroke="#000" shape-rendering="auto"/>
<polyline points="304,533.5 304,543.5" fill="none" stroke="#000" stroke-width="1" />
<rect x="295" y="543.5" width="9" height="10" fill="#00ffff" stroke="#000" stroke-width="1" />
<rect x="285" y="553.5" width="24" height="4" fill="#00ffff" stroke="#000" stroke-width="1" />
<polygon points="622.5,149.5 629,149.5 629,154.5 634,154.5 636.5,156.5 636.5,159.5 687.5,159.5 687.5,180.5 684.5,180.5 678,173.5 622.5,173.5" fill="#00ffff" stroke="#000" stroke-width="1" />
<circle cx="630.5" cy="165.5" r="3" fill="#00ffff" stroke="#000" stroke-width="1"  shape-rendering="geometricPrecision"/>
<rect x="677.5" y="164.5" width="6" height="4" fill="#00ffff" stroke="#000" stroke-width="1" />
<rect x="644" y="161.5" width="28.5" height="10" fill="#555555" stroke="#000" stroke-width="1" />
<polyline points="645.5,169.5 650,164.5 657,164.5 655,168.5 662,168.5 665,164.5 671.5,164.5" fill="none" stroke="#00ffff" stroke-width="2" />
<polyline points="647,170 653,170" fill="none" stroke="#00ffff" stroke-width="1" />
<polyline points="664.5,169.5 672,169.5" fill="none" stroke="#00ffff" stroke-width="1" />
<polyline points="659.5,156.5 659.5,152 671.5,152 671.5,149.5" fill="none" stroke="#000" stroke-width="3" />
<polyline points="659.5,156.5 659.5,152 671.5,152 671.5,150" fill="none" stroke="#f0f0f0" stroke-width="1.4" />
<circle cx="659.5" cy="160" r="4.2" fill="#c6c6c6" stroke="#5a5a5a" stroke-width="0.8"  shape-rendering="geometricPrecision"/>
<rect x="657" y="158.5" width="1" height="1" fill="#ffffff" stroke="none" stroke-width="1" />
<rect x="659" y="157" width="1" height="1" fill="#ffffff" stroke="none" stroke-width="1" />
<rect x="661" y="158.5" width="1" height="1" fill="#ffffff" stroke="none" stroke-width="1" />
<rect x="658" y="160.5" width="1" height="1" fill="#808080" stroke="none" stroke-width="1" />
<rect x="660" y="160.5" width="1" height="1" fill="#808080" stroke="none" stroke-width="1" />
<rect x="659" y="159" width="1" height="1" fill="#ffffff" stroke="none" stroke-width="1" />
<rect x="656.5" y="161" width="1" height="1" fill="#ffffff" stroke="none" stroke-width="1" />
<rect x="661.5" y="161" width="1" height="1" fill="#808080" stroke="none" stroke-width="1" />
<polygon points="493.5,587 500,587 500,592 505,592 507.5,594 507.5,597 558.5,597 558.5,618 555.5,618 549,611 493.5,611" fill="#00ffff" stroke="#000" stroke-width="1" />
<circle cx="501.5" cy="603" r="3" fill="#00ffff" stroke="#000" stroke-width="1"  shape-rendering="geometricPrecision"/>
<rect x="548.5" y="602" width="6" height="4" fill="#00ffff" stroke="#000" stroke-width="1" />
<rect x="515" y="599" width="28.5" height="10" fill="#555555" stroke="#000" stroke-width="1" />
<polyline points="516.5,607 521,602 528,602 526,606 533,606 536,602 542.5,602" fill="none" stroke="#00ffff" stroke-width="2" />
<polyline points="518,607.5 524,607.5" fill="none" stroke="#00ffff" stroke-width="1" />
<polyline points="535.5,607 543,607" fill="none" stroke="#00ffff" stroke-width="1" />
<polyline points="530.5,594 530.5,589.5 542.5,589.5 542.5,587" fill="none" stroke="#000" stroke-width="3" />
<polyline points="530.5,594 530.5,589.5 542.5,589.5 542.5,587.5" fill="none" stroke="#f0f0f0" stroke-width="1.4" />
<circle cx="530.5" cy="597.5" r="4.2" fill="#c6c6c6" stroke="#5a5a5a" stroke-width="0.8"  shape-rendering="geometricPrecision"/>
<rect x="528" y="596" width="1" height="1" fill="#ffffff" stroke="none" stroke-width="1" />
<rect x="530" y="594.5" width="1" height="1" fill="#ffffff" stroke="none" stroke-width="1" />
<rect x="532" y="596" width="1" height="1" fill="#ffffff" stroke="none" stroke-width="1" />
<rect x="529" y="598" width="1" height="1" fill="#808080" stroke="none" stroke-width="1" />
<rect x="531" y="598" width="1" height="1" fill="#808080" stroke="none" stroke-width="1" />
<rect x="530" y="596.5" width="1" height="1" fill="#ffffff" stroke="none" stroke-width="1" />
<rect x="527.5" y="598.5" width="1" height="1" fill="#ffffff" stroke="none" stroke-width="1" />
<rect x="532.5" y="598.5" width="1" height="1" fill="#808080" stroke="none" stroke-width="1" />
<polygon points="830.5,613 824,613 824,618 819,618 816.5,620 816.5,623 765.5,623 765.5,644 768.5,644 775,637 830.5,637" fill="#00ffff" stroke="#000" stroke-width="1" />
<circle cx="822.5" cy="629" r="3" fill="#00ffff" stroke="#000" stroke-width="1"  shape-rendering="geometricPrecision"/>
<rect x="769.5" y="628" width="6" height="4" fill="#00ffff" stroke="#000" stroke-width="1" />
<rect x="780.5" y="625" width="28.5" height="10" fill="#555555" stroke="#000" stroke-width="1" />
<polyline points="807.5,633 803,628 796,628 798,632 791,632 788,628 781.5,628" fill="none" stroke="#00ffff" stroke-width="2" />
<polyline points="806,633.5 800,633.5" fill="none" stroke="#00ffff" stroke-width="1" />
<polyline points="788.5,633 781,633" fill="none" stroke="#00ffff" stroke-width="1" />
<polyline points="793.5,620 793.5,615.5 781.5,615.5 781.5,613" fill="none" stroke="#000" stroke-width="3" />
<polyline points="793.5,620 793.5,615.5 781.5,615.5 781.5,613.5" fill="none" stroke="#f0f0f0" stroke-width="1.4" />
<circle cx="793.5" cy="623.5" r="4.2" fill="#c6c6c6" stroke="#5a5a5a" stroke-width="0.8"  shape-rendering="geometricPrecision"/>
<rect x="791" y="622" width="1" height="1" fill="#ffffff" stroke="none" stroke-width="1" />
<rect x="793" y="620.5" width="1" height="1" fill="#ffffff" stroke="none" stroke-width="1" />
<rect x="795" y="622" width="1" height="1" fill="#ffffff" stroke="none" stroke-width="1" />
<rect x="792" y="624" width="1" height="1" fill="#808080" stroke="none" stroke-width="1" />
<rect x="794" y="624" width="1" height="1" fill="#808080" stroke="none" stroke-width="1" />
<rect x="793" y="622.5" width="1" height="1" fill="#ffffff" stroke="none" stroke-width="1" />
<rect x="790.5" y="624.5" width="1" height="1" fill="#ffffff" stroke="none" stroke-width="1" />
<rect x="795.5" y="624.5" width="1" height="1" fill="#808080" stroke="none" stroke-width="1" />
<rect x="491.5" y="538.5" width="10" height="17.5" fill="#00ffff" stroke="#000" stroke-width="1" />
<rect x="495" y="540" width="3" height="5.5" fill="#000" stroke="none" stroke-width="1" />
<rect x="491.5" y="545" width="10" height="1" fill="#000" stroke="none" stroke-width="1" />
<rect x="491.5" y="545.5" width="3.5" height="4.5" fill="#000" stroke="none" stroke-width="1" />
<rect x="493.5" y="550" width="1" height="6" fill="#000" stroke="none" stroke-width="1" />
<rect x="492" y="557.5" width="9" height="17" fill="#008080" stroke="none" stroke-width="1" />
<polygon points="494,558 499.5,558 498,562 495.5,562" fill="#00ffff" stroke="none" stroke-width="1" />
<polyline points="492.5,558 495,563.5" fill="none" stroke="#000" stroke-width="1" />
<polyline points="500.5,558 498,563.5" fill="none" stroke="#000" stroke-width="1" />
<rect x="494" y="563.5" width="7" height="3.5" fill="#00ffff" stroke="#000" stroke-width="1" />
<rect x="494" y="567.5" width="7" height="3.5" fill="#00ffff" stroke="#000" stroke-width="1" />
<rect x="492" y="565.5" width="1" height="4.5" fill="#00ffff" stroke="none" stroke-width="1" />
<rect x="490" y="556" width="13" height="1.5" fill="#000" stroke="none" stroke-width="1" />
<rect x="490" y="556" width="2" height="19" fill="#000" stroke="none" stroke-width="1" />
<rect x="501" y="556" width="2" height="19" fill="#000" stroke="none" stroke-width="1" />
<rect x="603.5" y="646.5" width="10" height="17.5" fill="#00ffff" stroke="#000" stroke-width="1" />
<rect x="607" y="648" width="3" height="5.5" fill="#000" stroke="none" stroke-width="1" />
<rect x="603.5" y="653" width="10" height="1" fill="#000" stroke="none" stroke-width="1" />
<rect x="603.5" y="653.5" width="3.5" height="4.5" fill="#000" stroke="none" stroke-width="1" />
<rect x="605.5" y="658" width="1" height="6" fill="#000" stroke="none" stroke-width="1" />
<rect x="604" y="665.5" width="9" height="17" fill="#008080" stroke="none" stroke-width="1" />
<polygon points="606,666 611.5,666 610,670 607.5,670" fill="#00ffff" stroke="none" stroke-width="1" />
<polyline points="604.5,666 607,671.5" fill="none" stroke="#000" stroke-width="1" />
<polyline points="612.5,666 610,671.5" fill="none" stroke="#000" stroke-width="1" />
<rect x="606" y="671.5" width="7" height="3.5" fill="#00ffff" stroke="#000" stroke-width="1" />
<rect x="606" y="675.5" width="7" height="3.5" fill="#00ffff" stroke="#000" stroke-width="1" />
<rect x="604" y="673.5" width="1" height="4.5" fill="#00ffff" stroke="none" stroke-width="1" />
<rect x="602" y="664" width="13" height="1.5" fill="#000" stroke="none" stroke-width="1" />
<rect x="602" y="664" width="2" height="19" fill="#000" stroke="none" stroke-width="1" />
<rect x="613" y="664" width="2" height="19" fill="#000" stroke="none" stroke-width="1" />
<rect x="765.5" y="493.5" width="10" height="17.5" fill="#00ffff" stroke="#000" stroke-width="1" />
<rect x="769" y="495" width="3" height="5.5" fill="#000" stroke="none" stroke-width="1" />
<rect x="765.5" y="500" width="10" height="1" fill="#000" stroke="none" stroke-width="1" />
<rect x="765.5" y="500.5" width="3.5" height="4.5" fill="#000" stroke="none" stroke-width="1" />
<rect x="767.5" y="505" width="1" height="6" fill="#000" stroke="none" stroke-width="1" />
<rect x="766" y="512.5" width="9" height="17" fill="#008080" stroke="none" stroke-width="1" />
<polygon points="768,513 773.5,513 772,517 769.5,517" fill="#00ffff" stroke="none" stroke-width="1" />
<polyline points="766.5,513 769,518.5" fill="none" stroke="#000" stroke-width="1" />
<polyline points="774.5,513 772,518.5" fill="none" stroke="#000" stroke-width="1" />
<rect x="768" y="518.5" width="7" height="3.5" fill="#00ffff" stroke="#000" stroke-width="1" />
<rect x="768" y="522.5" width="7" height="3.5" fill="#00ffff" stroke="#000" stroke-width="1" />
<rect x="766" y="520.5" width="1" height="4.5" fill="#00ffff" stroke="none" stroke-width="1" />
<rect x="764" y="511" width="13" height="1.5" fill="#000" stroke="none" stroke-width="1" />
<rect x="764" y="511" width="2" height="19" fill="#000" stroke="none" stroke-width="1" />
<rect x="775" y="511" width="2" height="19" fill="#000" stroke="none" stroke-width="1" />
<rect x="945.5" y="119.5" width="32" height="48" fill="#00ffff" stroke="#000" stroke-width="1" />
<polyline points="945.5,129.5 977.5,129.5" fill="none" stroke="#000" stroke-width="1" />
<polyline points="945.5,156 977.5,156" fill="none" stroke="#000" stroke-width="1" />
<polyline points="945.5,132.5 971.5,132.5 971.5,143.5 946,152.5" fill="none" stroke="#000" stroke-width="1" />
<polygon points="945.5,167.5 977.5,167.5 965,180.5 958,180.5" fill="#00ffff" stroke="#000" stroke-width="1" />
<rect x="958" y="171" width="6.5" height="4.5" fill="#00ffff" stroke="#000" stroke-width="1" />
<circle cx="961.5" cy="186.5" r="6" fill="#00ffff" stroke="#000" stroke-width="1"  shape-rendering="geometricPrecision"/>
<circle cx="961.5" cy="186.5" r="3.2" fill="#00ffff" stroke="#000" stroke-width="1"  shape-rendering="geometricPrecision"/>
<polygon points="973.5,158.5 984.5,158.5 981.5,166 973.5,166" fill="#00ffff" stroke="#000" stroke-width="1" />
<polyline points="979.5,156.5 979.5,167.5" fill="none" stroke="#000" stroke-width="1" />
<rect x="986.5" y="159" width="2" height="8.5" fill="#00ffff" stroke="#000" stroke-width="1" />
<rect x="988.5" y="149.5" width="6.5" height="26" fill="#00ffff" stroke="#000" stroke-width="1" />
<rect x="995" y="157.5" width="10" height="11" fill="#00ffff" stroke="#000" stroke-width="1" />
<polyline points="995,157.5 1005,168.5" fill="none" stroke="#000" stroke-width="1" />
<polyline points="995,168.5 1005,157.5" fill="none" stroke="#000" stroke-width="1" />
<rect x="1005" y="157.5" width="2.5" height="11" fill="#00ffff" stroke="#000" stroke-width="1" />
<rect x="995.5" y="170.5" width="10" height="10" fill="#00ffff" stroke="#000" stroke-width="1" />
<rect x="945.5" y="231.5" width="32" height="48" fill="#00ffff" stroke="#000" stroke-width="1" />
<polyline points="945.5,241.5 977.5,241.5" fill="none" stroke="#000" stroke-width="1" />
<polyline points="945.5,268 977.5,268" fill="none" stroke="#000" stroke-width="1" />
<polyline points="945.5,244.5 971.5,244.5 971.5,255.5 946,264.5" fill="none" stroke="#000" stroke-width="1" />
<polygon points="945.5,279.5 977.5,279.5 965,292.5 958,292.5" fill="#00ffff" stroke="#000" stroke-width="1" />
<rect x="958" y="283" width="6.5" height="4.5" fill="#00ffff" stroke="#000" stroke-width="1" />
<circle cx="961.5" cy="298.5" r="6" fill="#00ffff" stroke="#000" stroke-width="1"  shape-rendering="geometricPrecision"/>
<circle cx="961.5" cy="298.5" r="3.2" fill="#00ffff" stroke="#000" stroke-width="1"  shape-rendering="geometricPrecision"/>
<polygon points="973.5,270.5 984.5,270.5 981.5,278 973.5,278" fill="#00ffff" stroke="#000" stroke-width="1" />
<polyline points="979.5,268.5 979.5,279.5" fill="none" stroke="#000" stroke-width="1" />
<rect x="986.5" y="271" width="2" height="8.5" fill="#00ffff" stroke="#000" stroke-width="1" />
<rect x="988.5" y="261.5" width="6.5" height="26" fill="#00ffff" stroke="#000" stroke-width="1" />
<rect x="995" y="269.5" width="10" height="11" fill="#00ffff" stroke="#000" stroke-width="1" />
<polyline points="995,269.5 1005,280.5" fill="none" stroke="#000" stroke-width="1" />
<polyline points="995,280.5 1005,269.5" fill="none" stroke="#000" stroke-width="1" />
<rect x="1005" y="269.5" width="2.5" height="11" fill="#00ffff" stroke="#000" stroke-width="1" />
<rect x="995.5" y="282.5" width="10" height="10" fill="#00ffff" stroke="#000" stroke-width="1" />
<rect x="941" y="102" width="44" height="13" fill="#ece9d8" stroke="none" stroke-width="1" />
<rect x="941" y="214" width="44" height="13" fill="#ece9d8" stroke="none" stroke-width="1" />
<path d="M938.1 369.5L940.575 376.5" stroke="#3c3c3c" stroke-width="1.3" fill="none" shape-rendering="geometricPrecision" stroke-linecap="butt"/>
<path d="M944.375 369.5L946.85 376.5" stroke="#3c3c3c" stroke-width="1.3" fill="none" shape-rendering="geometricPrecision" stroke-linecap="butt"/>
<path d="M950.65 369.5L953.125 376.5" stroke="#3c3c3c" stroke-width="1.3" fill="none" shape-rendering="geometricPrecision" stroke-linecap="butt"/>
<path d="M956.925 369.5L959.4 376.5" stroke="#3c3c3c" stroke-width="1.3" fill="none" shape-rendering="geometricPrecision" stroke-linecap="butt"/>
<path d="M934.1 377.5L938.3 368.5" stroke="#3a3a3a" stroke-width="3.6" fill="none" shape-rendering="geometricPrecision" stroke-linecap="butt"/>
<path d="M934.4 376.9L938 369.1" stroke="#8e8e8e" stroke-width="2" fill="none" shape-rendering="geometricPrecision" stroke-linecap="butt"/>
<path d="M940.375 377.5L944.575 368.5" stroke="#3a3a3a" stroke-width="3.6" fill="none" shape-rendering="geometricPrecision" stroke-linecap="butt"/>
<path d="M940.675 376.9L944.275 369.1" stroke="#8e8e8e" stroke-width="2" fill="none" shape-rendering="geometricPrecision" stroke-linecap="butt"/>
<path d="M946.65 377.5L950.85 368.5" stroke="#3a3a3a" stroke-width="3.6" fill="none" shape-rendering="geometricPrecision" stroke-linecap="butt"/>
<path d="M946.95 376.9L950.55 369.1" stroke="#8e8e8e" stroke-width="2" fill="none" shape-rendering="geometricPrecision" stroke-linecap="butt"/>
<path d="M952.925 377.5L957.125 368.5" stroke="#3a3a3a" stroke-width="3.6" fill="none" shape-rendering="geometricPrecision" stroke-linecap="butt"/>
<path d="M953.225 376.9L956.825 369.1" stroke="#8e8e8e" stroke-width="2" fill="none" shape-rendering="geometricPrecision" stroke-linecap="butt"/>
<path d="M959.2 377.5L963.4 368.5" stroke="#3a3a3a" stroke-width="3.6" fill="none" shape-rendering="geometricPrecision" stroke-linecap="butt"/>
<path d="M959.5 376.9L963.1 369.1" stroke="#8e8e8e" stroke-width="2" fill="none" shape-rendering="geometricPrecision" stroke-linecap="butt"/>
<path d="M911.5 368H903.9Q901.5 368 901.5 370.4V375.6Q901.5 378 903.9 378H911.5Z" fill="#00ffff" stroke="#000" shape-rendering="geometricPrecision"/>
<polyline points="909.5,368 909.5,378" fill="none" stroke="#000" stroke-width="1" />
<rect x="906" y="376" width="2" height="1.5" fill="#000" stroke="none" stroke-width="1" />
<rect x="911.5" y="372" width="2.5" height="2" fill="#00ffff" stroke="none" stroke-width="1" />
<polygon points="916,368.5 933.5,368.5 940.5,377 916,377" fill="#00ffff" stroke="#000" stroke-width="1" />
<rect x="914" y="367" width="2" height="11.5" fill="#00ffff" stroke="#000" stroke-width="1" />
<rect x="922.5" y="371.5" width="6" height="4" fill="#00ffff" stroke="#000" stroke-width="1" />
<polygon points="917.5,366.5 933,366.5 931,368.5 919.5,368.5" fill="#00ffff" stroke="#000" stroke-width="1" />
<rect x="917.5" y="364" width="15.5" height="2.5" fill="#00ffff" stroke="#000" stroke-width="1" />
<polygon points="958,368.5 983.5,368.5 983.5,377 965.5,377" fill="#00ffff" stroke="#000" stroke-width="1" />
<rect x="970.5" y="370" width="6" height="4" fill="#00ffff" stroke="#000" stroke-width="1" />
<polygon points="968.5,377 981,377 981.5,379 966.5,379" fill="#00ffff" stroke="#000" stroke-width="1" />
<rect x="966.5" y="379" width="15" height="2.5" fill="#00ffff" stroke="#000" stroke-width="1" />
<rect x="983.5" y="367" width="2" height="11.5" fill="#00ffff" stroke="#000" stroke-width="1" />
<rect x="985.5" y="372" width="2.5" height="2" fill="#00ffff" stroke="none" stroke-width="1" />
<path d="M988 368H995.6Q998 368 998 370.4V375.6Q998 378 995.6 378H988Z" fill="#00ffff" stroke="#000" shape-rendering="geometricPrecision"/>
<polyline points="990,368 990,378" fill="none" stroke="#000" stroke-width="1" />
<rect x="991.5" y="369" width="2" height="1.5" fill="#000" stroke="none" stroke-width="1" />
<path d="M886.1 528.5L888.35 535.5" stroke="#3c3c3c" stroke-width="1.3" fill="none" shape-rendering="geometricPrecision" stroke-linecap="butt"/>
<path d="M892.15 528.5L894.4 535.5" stroke="#3c3c3c" stroke-width="1.3" fill="none" shape-rendering="geometricPrecision" stroke-linecap="butt"/>
<path d="M882.1 536.5L886.3 527.5" stroke="#3a3a3a" stroke-width="3.6" fill="none" shape-rendering="geometricPrecision" stroke-linecap="butt"/>
<path d="M882.4 535.9L886 528.1" stroke="#8e8e8e" stroke-width="2" fill="none" shape-rendering="geometricPrecision" stroke-linecap="butt"/>
<path d="M888.15 536.5L892.35 527.5" stroke="#3a3a3a" stroke-width="3.6" fill="none" shape-rendering="geometricPrecision" stroke-linecap="butt"/>
<path d="M888.45 535.9L892.05 528.1" stroke="#8e8e8e" stroke-width="2" fill="none" shape-rendering="geometricPrecision" stroke-linecap="butt"/>
<path d="M894.2 536.5L898.4 527.5" stroke="#3a3a3a" stroke-width="3.6" fill="none" shape-rendering="geometricPrecision" stroke-linecap="butt"/>
<path d="M894.5 535.9L898.1 528.1" stroke="#8e8e8e" stroke-width="2" fill="none" shape-rendering="geometricPrecision" stroke-linecap="butt"/>
<polygon points="891,527.5 916.5,527.5 916.5,536 898.5,536" fill="#00ffff" stroke="#000" stroke-width="1" />
<rect x="903.5" y="529" width="6" height="4" fill="#00ffff" stroke="#000" stroke-width="1" />
<polygon points="901.5,536 914,536 914.5,538 899.5,538" fill="#00ffff" stroke="#000" stroke-width="1" />
<rect x="899.5" y="538" width="15" height="2.5" fill="#00ffff" stroke="#000" stroke-width="1" />
<rect x="916.5" y="526" width="2" height="11.5" fill="#00ffff" stroke="#000" stroke-width="1" />
<rect x="918.5" y="531" width="2.5" height="2" fill="#00ffff" stroke="none" stroke-width="1" />
<path d="M921 527H928.6Q931 527 931 529.4V534.6Q931 537 928.6 537H921Z" fill="#00ffff" stroke="#000" shape-rendering="geometricPrecision"/>
<polyline points="923,527 923,537" fill="none" stroke="#000" stroke-width="1" />
<rect x="924.5" y="528" width="2" height="1.5" fill="#000" stroke="none" stroke-width="1" />
<path d="M974.1 499.5L976.35 506.5" stroke="#3c3c3c" stroke-width="1.3" fill="none" shape-rendering="geometricPrecision" stroke-linecap="butt"/>
<path d="M980.15 499.5L982.4 506.5" stroke="#3c3c3c" stroke-width="1.3" fill="none" shape-rendering="geometricPrecision" stroke-linecap="butt"/>
<path d="M970.1 507.5L974.3 498.5" stroke="#3a3a3a" stroke-width="3.6" fill="none" shape-rendering="geometricPrecision" stroke-linecap="butt"/>
<path d="M970.4 506.9L974 499.1" stroke="#8e8e8e" stroke-width="2" fill="none" shape-rendering="geometricPrecision" stroke-linecap="butt"/>
<path d="M976.15 507.5L980.35 498.5" stroke="#3a3a3a" stroke-width="3.6" fill="none" shape-rendering="geometricPrecision" stroke-linecap="butt"/>
<path d="M976.45 506.9L980.05 499.1" stroke="#8e8e8e" stroke-width="2" fill="none" shape-rendering="geometricPrecision" stroke-linecap="butt"/>
<path d="M982.2 507.5L986.4 498.5" stroke="#3a3a3a" stroke-width="3.6" fill="none" shape-rendering="geometricPrecision" stroke-linecap="butt"/>
<path d="M982.5 506.9L986.1 499.1" stroke="#8e8e8e" stroke-width="2" fill="none" shape-rendering="geometricPrecision" stroke-linecap="butt"/>
<polygon points="979,498.5 1004.5,498.5 1004.5,507 986.5,507" fill="#00ffff" stroke="#000" stroke-width="1" />
<polygon points="989.5,507 1002,507 1002.5,509 987.5,509" fill="#00ffff" stroke="#000" stroke-width="1" />
<rect x="987.5" y="509" width="15" height="2.5" fill="#00ffff" stroke="#000" stroke-width="1" />
<rect x="1004.5" y="497" width="2" height="11.5" fill="#00ffff" stroke="#000" stroke-width="1" />
<rect x="1006.5" y="502" width="2.5" height="2" fill="#00ffff" stroke="none" stroke-width="1" />
<path d="M1009 498H1016.6Q1019 498 1019 500.4V505.6Q1019 508 1016.6 508H1009Z" fill="#00ffff" stroke="#000" shape-rendering="geometricPrecision"/>
<polyline points="1011,498 1011,508" fill="none" stroke="#000" stroke-width="1" />
<rect x="1012.5" y="499" width="2" height="1.5" fill="#000" stroke="none" stroke-width="1" />
<path d="M950.6 629.5L952.35 636.5" stroke="#3c3c3c" stroke-width="1.3" fill="none" shape-rendering="geometricPrecision" stroke-linecap="butt"/>
<path d="M956.15 629.5L957.9 636.5" stroke="#3c3c3c" stroke-width="1.3" fill="none" shape-rendering="geometricPrecision" stroke-linecap="butt"/>
<path d="M946.6 637.5L950.8 628.5" stroke="#3a3a3a" stroke-width="3.6" fill="none" shape-rendering="geometricPrecision" stroke-linecap="butt"/>
<path d="M946.9 636.9L950.5 629.1" stroke="#8e8e8e" stroke-width="2" fill="none" shape-rendering="geometricPrecision" stroke-linecap="butt"/>
<path d="M952.15 637.5L956.35 628.5" stroke="#3a3a3a" stroke-width="3.6" fill="none" shape-rendering="geometricPrecision" stroke-linecap="butt"/>
<path d="M952.45 636.9L956.05 629.1" stroke="#8e8e8e" stroke-width="2" fill="none" shape-rendering="geometricPrecision" stroke-linecap="butt"/>
<path d="M957.7 637.5L961.9 628.5" stroke="#3a3a3a" stroke-width="3.6" fill="none" shape-rendering="geometricPrecision" stroke-linecap="butt"/>
<path d="M958 636.9L961.6 629.1" stroke="#8e8e8e" stroke-width="2" fill="none" shape-rendering="geometricPrecision" stroke-linecap="butt"/>
<path d="M922.5 628H914.9Q912.5 628 912.5 630.4V635.6Q912.5 638 914.9 638H922.5Z" fill="#00ffff" stroke="#000" shape-rendering="geometricPrecision"/>
<polyline points="920.5,628 920.5,638" fill="none" stroke="#000" stroke-width="1" />
<rect x="917" y="636" width="2" height="1.5" fill="#000" stroke="none" stroke-width="1" />
<rect x="922.5" y="632" width="2.5" height="2" fill="#00ffff" stroke="none" stroke-width="1" />
<polygon points="927,628.5 944.5,628.5 951.5,637 927,637" fill="#00ffff" stroke="#000" stroke-width="1" />
<rect x="925" y="627" width="2" height="11.5" fill="#00ffff" stroke="#000" stroke-width="1" />
<rect x="933.5" y="631.5" width="6" height="4" fill="#00ffff" stroke="#000" stroke-width="1" />
<polygon points="928.5,626.5 944,626.5 942,628.5 930.5,628.5" fill="#00ffff" stroke="#000" stroke-width="1" />
<rect x="928.5" y="624" width="15.5" height="2.5" fill="#00ffff" stroke="#000" stroke-width="1" />
<rect x="945.5" y="631.5" width="6" height="4" fill="#00ffff" stroke="#000" stroke-width="1" />
<path d="M923.6 693.5L925.6 700.5" stroke="#3c3c3c" stroke-width="1.3" fill="none" shape-rendering="geometricPrecision" stroke-linecap="butt"/>
<path d="M929.4 693.5L931.4 700.5" stroke="#3c3c3c" stroke-width="1.3" fill="none" shape-rendering="geometricPrecision" stroke-linecap="butt"/>
<path d="M919.6 701.5L923.8 692.5" stroke="#3a3a3a" stroke-width="3.6" fill="none" shape-rendering="geometricPrecision" stroke-linecap="butt"/>
<path d="M919.9 700.9L923.5 693.1" stroke="#8e8e8e" stroke-width="2" fill="none" shape-rendering="geometricPrecision" stroke-linecap="butt"/>
<path d="M925.4 701.5L929.6 692.5" stroke="#3a3a3a" stroke-width="3.6" fill="none" shape-rendering="geometricPrecision" stroke-linecap="butt"/>
<path d="M925.7 700.9L929.3 693.1" stroke="#8e8e8e" stroke-width="2" fill="none" shape-rendering="geometricPrecision" stroke-linecap="butt"/>
<path d="M931.2 701.5L935.4 692.5" stroke="#3a3a3a" stroke-width="3.6" fill="none" shape-rendering="geometricPrecision" stroke-linecap="butt"/>
<path d="M931.5 700.9L935.1 693.1" stroke="#8e8e8e" stroke-width="2" fill="none" shape-rendering="geometricPrecision" stroke-linecap="butt"/>
<path d="M896 692H888.4Q886 692 886 694.4V699.6Q886 702 888.4 702H896Z" fill="#00ffff" stroke="#000" shape-rendering="geometricPrecision"/>
<polyline points="894,692 894,702" fill="none" stroke="#000" stroke-width="1" />
<rect x="890.5" y="700" width="2" height="1.5" fill="#000" stroke="none" stroke-width="1" />
<rect x="896" y="696" width="2.5" height="2" fill="#00ffff" stroke="none" stroke-width="1" />
<polygon points="900.5,692.5 918,692.5 925,701 900.5,701" fill="#00ffff" stroke="#000" stroke-width="1" />
<rect x="898.5" y="691" width="2" height="11.5" fill="#00ffff" stroke="#000" stroke-width="1" />
<rect x="907" y="695.5" width="6" height="4" fill="#00ffff" stroke="#000" stroke-width="1" />
<polygon points="902,690.5 917.5,690.5 915.5,692.5 904,692.5" fill="#00ffff" stroke="#000" stroke-width="1" />
<rect x="902" y="688" width="15.5" height="2.5" fill="#00ffff" stroke="#000" stroke-width="1" />
<path d="M988 335 L988 333 Q987.5 329.5 984.5 329.5 L981.5 329.5 Q977.5 330 977.5 334 L977.5 340 Q978 344 982 344.5" fill="none" stroke="#000" stroke-width="3.6" shape-rendering="geometricPrecision"/>
<path d="M988 335 L988 333 Q987.5 329.5 984.5 329.5 L981.5 329.5 Q977.5 330 977.5 334 L977.5 340 Q978 344 982 344.5" fill="none" stroke="#00ffff" stroke-width="1.4" shape-rendering="geometricPrecision"/>
<circle cx="987.5" cy="338.5" r="4.2" fill="#00ffff" stroke="#000" stroke-width="1"  shape-rendering="geometricPrecision"/>
<circle cx="1001.5" cy="338.5" r="3.4" fill="#00ffff" stroke="#000" stroke-width="1"  shape-rendering="geometricPrecision"/>
<rect x="1006.5" y="343" width="3" height="2.5" fill="#00ffff" stroke="#000" stroke-width="1" />
<rect x="981.5" y="341.5" width="25" height="5" fill="#00ffff" stroke="#000" stroke-width="1" />
<polygon points="21.5,596 38,596 32,606.5 28,606.5" fill="#00ffff" stroke="#000" stroke-width="1" />
<polygon points="40,596 68,596 56.5,608 51.5,608" fill="#00ffff" stroke="#000" stroke-width="1" />
<polygon points="20.5,582 24,577.5 62,577.5 69.5,582 69.5,595.5 20.5,595.5" fill="#00ffff" stroke="#000" stroke-width="1" />
<polyline points="20.5,582 69.5,582" fill="none" stroke="#000" stroke-width="1" />
<rect x="28.5" y="580.5" width="2" height="5.5" fill="#00ffff" stroke="#000" stroke-width="1" rx="1"/>
<rect x="41.5" y="580.5" width="2" height="5.5" fill="#00ffff" stroke="#000" stroke-width="1" rx="1"/>
<path d="M57.5 583L75 584.5A4 4 0 0 1 75 592.5L57.5 594A5.5 5.5 0 0 1 57.5 583Z" fill="#00ffff" stroke="#000" shape-rendering="auto"/>
<path d="M57.5 584.5L65.5 585.5L68.5 584.5L74.5 585M57.5 592.5L65.5 591.5L68.5 592.5L74.5 592" fill="none" stroke="#000" shape-rendering="auto"/>
<polygon points="56,588.5 57.5,587 59,588.5 57.5,590" fill="#00ffff" stroke="#000" stroke-width="1" />
<polygon points="73,588.5 74.5,587 76,588.5 74.5,590" fill="#00ffff" stroke="#000" stroke-width="1" />
<polygon points="1001,68 1011,68 1014.5,72.5 1014.5,82 1018,87 1018,88.5 1011,88.5 1008,93 1005,88.5 994,88.5 994,87 997.5,82 997.5,72.5" fill="#00ffff" stroke="none" stroke-width="1" />
<polyline points="1011,68.5 1014.5,72.5 1014.5,82 1018,87 1018,89 1011,89 1008,93 1008,93.4" fill="none" stroke="#fff" stroke-width="1" />
<polyline points="994,89 1005,89" fill="none" stroke="#fff" stroke-width="1" />
<polyline points="1011.5,68 1001,68 997.5,72.5 997.5,82 994,87 994,88.5" fill="none" stroke="#000" stroke-width="1" />
<polyline points="1005,89 1005,90 1007.5,93" fill="none" stroke="#000" stroke-width="1" />
<rect x="45.5" y="476.5" width="7.5" height="2" fill="#00ffff" stroke="none" stroke-width="1" />
<rect x="45.5" y="482.5" width="7.5" height="2" fill="#00ffff" stroke="none" stroke-width="1" />
<rect x="41" y="479.5" width="18.5" height="2" fill="#ffff00" stroke="none" stroke-width="1" />
<rect x="57.5" y="479.5" width="2" height="6" fill="#ffff00" stroke="none" stroke-width="1" />
<rect x="133" y="476.5" width="7.5" height="2" fill="#00ffff" stroke="none" stroke-width="1" />
<rect x="133" y="482.5" width="7.5" height="2" fill="#00ffff" stroke="none" stroke-width="1" />
<rect x="128.5" y="479.5" width="18.5" height="2" fill="#ffff00" stroke="none" stroke-width="1" />
<rect x="145" y="479.5" width="2" height="6" fill="#ffff00" stroke="none" stroke-width="1" />
</g>
<text x="109.8" y="82" font-family="DejaVu Sans Condensed, DejaVu Sans, Liberation Sans, sans-serif" font-size="12.5" fill="#fff" font-weight="bold" text-anchor="start" letter-spacing="0.4">11</text>
<text x="212.8" y="82" font-family="DejaVu Sans Condensed, DejaVu Sans, Liberation Sans, sans-serif" font-size="12.5" fill="#fff" font-weight="bold" text-anchor="start" letter-spacing="0.4">101</text>
<text x="272.8" y="82" font-family="DejaVu Sans Condensed, DejaVu Sans, Liberation Sans, sans-serif" font-size="12.5" fill="#fff" font-weight="bold" text-anchor="start" letter-spacing="0.4">105</text>
<text x="333.8" y="82" font-family="DejaVu Sans Condensed, DejaVu Sans, Liberation Sans, sans-serif" font-size="12.5" fill="#fff" font-weight="bold" text-anchor="start" letter-spacing="0.4">108</text>
<text x="413.8" y="82" font-family="DejaVu Sans Condensed, DejaVu Sans, Liberation Sans, sans-serif" font-size="12.5" fill="#fff" font-weight="bold" text-anchor="start" letter-spacing="0.4">113</text>
<text x="504.8" y="82" font-family="DejaVu Sans Condensed, DejaVu Sans, Liberation Sans, sans-serif" font-size="12.5" fill="#fff" font-weight="bold" text-anchor="start" letter-spacing="0.4">116</text>
<text x="560.8" y="82" font-family="DejaVu Sans Condensed, DejaVu Sans, Liberation Sans, sans-serif" font-size="12.5" fill="#fff" font-weight="bold" text-anchor="start" letter-spacing="0.4">121</text>
<text x="632.8" y="82" font-family="DejaVu Sans Condensed, DejaVu Sans, Liberation Sans, sans-serif" font-size="12.5" fill="#fff" font-weight="bold" text-anchor="start" letter-spacing="0.4">126</text>
<text x="706.8" y="82" font-family="DejaVu Sans Condensed, DejaVu Sans, Liberation Sans, sans-serif" font-size="12.5" fill="#fff" font-weight="bold" text-anchor="start" letter-spacing="0.4">131</text>
<text x="775.8" y="82" font-family="DejaVu Sans Condensed, DejaVu Sans, Liberation Sans, sans-serif" font-size="12.5" fill="#fff" font-weight="bold" text-anchor="start" letter-spacing="0.4">136</text>
<text x="842.8" y="82" font-family="DejaVu Sans Condensed, DejaVu Sans, Liberation Sans, sans-serif" font-size="12.5" fill="#fff" font-weight="bold" text-anchor="start" letter-spacing="0.4">138</text>
<text x="215.8" y="165" font-family="DejaVu Sans Condensed, DejaVu Sans, Liberation Sans, sans-serif" font-size="12.5" fill="#fff" font-weight="bold" text-anchor="start" letter-spacing="0.4">13</text>
<text x="219.8" y="262" font-family="DejaVu Sans Condensed, DejaVu Sans, Liberation Sans, sans-serif" font-size="12.5" fill="#fff" font-weight="bold" text-anchor="start" letter-spacing="0.4">100</text>
<text x="287.3" y="210" font-family="DejaVu Sans Condensed, DejaVu Sans, Liberation Sans, sans-serif" font-size="12.5" fill="#fff" font-weight="bold" text-anchor="start" letter-spacing="0.4">106</text>
<text x="324.3" y="235" font-family="DejaVu Sans Condensed, DejaVu Sans, Liberation Sans, sans-serif" font-size="12.5" fill="#fff" font-weight="bold" text-anchor="start" letter-spacing="0.4">107</text>
<text x="359.8" y="194" font-family="DejaVu Sans Condensed, DejaVu Sans, Liberation Sans, sans-serif" font-size="12.5" fill="#fff" font-weight="bold" text-anchor="start" letter-spacing="0.4">109</text>
<text x="339.8" y="324" font-family="DejaVu Sans Condensed, DejaVu Sans, Liberation Sans, sans-serif" font-size="12.5" fill="#fff" font-weight="bold" text-anchor="start" letter-spacing="0.4">110</text>
<text x="387.8" y="324" font-family="DejaVu Sans Condensed, DejaVu Sans, Liberation Sans, sans-serif" font-size="12.5" fill="#fff" font-weight="bold" text-anchor="start" letter-spacing="0.4">111</text>
<text x="435.8" y="324" font-family="DejaVu Sans Condensed, DejaVu Sans, Liberation Sans, sans-serif" font-size="12.5" fill="#fff" font-weight="bold" text-anchor="start" letter-spacing="0.4">114</text>
<text x="504.8" y="361" font-family="DejaVu Sans Condensed, DejaVu Sans, Liberation Sans, sans-serif" font-size="12.5" fill="#fff" font-weight="bold" text-anchor="start" letter-spacing="0.4">117</text>
<text x="541.8" y="368" font-family="DejaVu Sans Condensed, DejaVu Sans, Liberation Sans, sans-serif" font-size="12.5" fill="#fff" font-weight="bold" text-anchor="start" letter-spacing="0.4">118</text>
<text x="213.8" y="402" font-family="DejaVu Sans Condensed, DejaVu Sans, Liberation Sans, sans-serif" font-size="12.5" fill="#fff" font-weight="bold" text-anchor="start" letter-spacing="0.4">102</text>
<text x="284.3" y="521" font-family="DejaVu Sans Condensed, DejaVu Sans, Liberation Sans, sans-serif" font-size="12.5" fill="#fff" font-weight="bold" text-anchor="start" letter-spacing="0.4">103</text>
<text x="275.8" y="609" font-family="DejaVu Sans Condensed, DejaVu Sans, Liberation Sans, sans-serif" font-size="12.5" fill="#fff" font-weight="bold" text-anchor="start" letter-spacing="0.4">104</text>
<text x="342.8" y="547" font-family="DejaVu Sans Condensed, DejaVu Sans, Liberation Sans, sans-serif" font-size="12.5" fill="#fff" font-weight="bold" text-anchor="start" letter-spacing="0.4">112</text>
<text x="435.8" y="666" font-family="DejaVu Sans Condensed, DejaVu Sans, Liberation Sans, sans-serif" font-size="12.5" fill="#fff" font-weight="bold" text-anchor="start" letter-spacing="0.4">115</text>
<text x="456.8" y="557" font-family="DejaVu Sans Condensed, DejaVu Sans, Liberation Sans, sans-serif" font-size="12.5" fill="#fff" font-weight="bold" text-anchor="start" letter-spacing="0.4">119</text>
<text x="461.8" y="603" font-family="DejaVu Sans Condensed, DejaVu Sans, Liberation Sans, sans-serif" font-size="12.5" fill="#fff" font-weight="bold" text-anchor="start" letter-spacing="0.4">120</text>
<text x="517.8" y="202" font-family="DejaVu Sans Condensed, DejaVu Sans, Liberation Sans, sans-serif" font-size="12.5" fill="#fff" font-weight="bold" text-anchor="start" letter-spacing="0.4">122</text>
<text x="538.8" y="561" font-family="DejaVu Sans Condensed, DejaVu Sans, Liberation Sans, sans-serif" font-size="12.5" fill="#fff" font-weight="bold" text-anchor="start" letter-spacing="0.4">123</text>
<text x="578.8" y="604" font-family="DejaVu Sans Condensed, DejaVu Sans, Liberation Sans, sans-serif" font-size="12.5" fill="#fff" font-weight="bold" text-anchor="start" letter-spacing="0.4">124</text>
<text x="569.8" y="659" font-family="DejaVu Sans Condensed, DejaVu Sans, Liberation Sans, sans-serif" font-size="12.5" fill="#fff" font-weight="bold" text-anchor="start" letter-spacing="0.4">125</text>
<text x="591.8" y="164" font-family="DejaVu Sans Condensed, DejaVu Sans, Liberation Sans, sans-serif" font-size="12.5" fill="#fff" font-weight="bold" text-anchor="start" letter-spacing="0.4">127</text>
<text x="696.8" y="179" font-family="DejaVu Sans Condensed, DejaVu Sans, Liberation Sans, sans-serif" font-size="12.5" fill="#fff" font-weight="bold" text-anchor="start" letter-spacing="0.4">128</text>
<text x="731.3" y="566" font-family="DejaVu Sans Condensed, DejaVu Sans, Liberation Sans, sans-serif" font-size="12.5" fill="#fff" font-weight="bold" text-anchor="start" letter-spacing="0.4">129</text>
<text x="679.8" y="602" font-family="DejaVu Sans Condensed, DejaVu Sans, Liberation Sans, sans-serif" font-size="12.5" fill="#fff" font-weight="bold" text-anchor="start" letter-spacing="0.4">130</text>
<text x="747.3" y="208" font-family="DejaVu Sans Condensed, DejaVu Sans, Liberation Sans, sans-serif" font-size="12.5" fill="#fff" font-weight="bold" text-anchor="start" letter-spacing="0.4">132</text>
<text x="784.3" y="232" font-family="DejaVu Sans Condensed, DejaVu Sans, Liberation Sans, sans-serif" font-size="12.5" fill="#fff" font-weight="bold" text-anchor="start" letter-spacing="0.4">133</text>
<text x="732.8" y="511" font-family="DejaVu Sans Condensed, DejaVu Sans, Liberation Sans, sans-serif" font-size="12.5" fill="#fff" font-weight="bold" text-anchor="start" letter-spacing="0.4">134</text>
<text x="799.8" y="656" font-family="DejaVu Sans Condensed, DejaVu Sans, Liberation Sans, sans-serif" font-size="12.5" fill="#fff" font-weight="bold" text-anchor="start" letter-spacing="0.4">135</text>
<text x="779.3" y="328" font-family="DejaVu Sans Condensed, DejaVu Sans, Liberation Sans, sans-serif" font-size="12.5" fill="#fff" font-weight="bold" text-anchor="start" letter-spacing="0.4">137</text>
<text x="905.3" y="396" font-family="DejaVu Sans Condensed, DejaVu Sans, Liberation Sans, sans-serif" font-size="12.5" fill="#fff" font-weight="bold" text-anchor="start" letter-spacing="0.4">141</text>
<text x="944.8" y="344" font-family="DejaVu Sans Condensed, DejaVu Sans, Liberation Sans, sans-serif" font-size="12.5" fill="#fff" font-weight="bold" text-anchor="start" letter-spacing="0.4">150</text>
<text x="915.8" y="187" font-family="DejaVu Sans Condensed, DejaVu Sans, Liberation Sans, sans-serif" font-size="12.5" fill="#fff" font-weight="bold" text-anchor="start" letter-spacing="0.4">144</text>
<text x="986.8" y="198" font-family="DejaVu Sans Condensed, DejaVu Sans, Liberation Sans, sans-serif" font-size="12.5" fill="#fff" font-weight="bold" text-anchor="start" letter-spacing="0.4">143</text>
<text x="915.8" y="299" font-family="DejaVu Sans Condensed, DejaVu Sans, Liberation Sans, sans-serif" font-size="12.5" fill="#fff" font-weight="bold" text-anchor="start" letter-spacing="0.4">147</text>
<text x="986.3" y="310" font-family="DejaVu Sans Condensed, DejaVu Sans, Liberation Sans, sans-serif" font-size="12.5" fill="#fff" font-weight="bold" text-anchor="start" letter-spacing="0.4">146</text>
<text x="886.8" y="519" font-family="DejaVu Sans Condensed, DejaVu Sans, Liberation Sans, sans-serif" font-size="12.5" fill="#fff" font-weight="bold" text-anchor="start" letter-spacing="0.4">139</text>
<text x="902.8" y="587" font-family="DejaVu Sans Condensed, DejaVu Sans, Liberation Sans, sans-serif" font-size="12.5" fill="#fff" font-weight="bold" text-anchor="start" letter-spacing="0.4">140</text>
<text x="915.8" y="656" font-family="DejaVu Sans Condensed, DejaVu Sans, Liberation Sans, sans-serif" font-size="12.5" fill="#fff" font-weight="bold" text-anchor="start" letter-spacing="0.4">142</text>
<text x="889.8" y="720" font-family="DejaVu Sans Condensed, DejaVu Sans, Liberation Sans, sans-serif" font-size="12.5" fill="#fff" font-weight="bold" text-anchor="start" letter-spacing="0.4">139</text>
<text x="19.3" y="543" font-family="DejaVu Sans Condensed, DejaVu Sans, Liberation Sans, sans-serif" font-size="12.5" fill="#fff" font-weight="bold" text-anchor="start" letter-spacing="0.4">7</text>
<text x="156.3" y="543" font-family="DejaVu Sans Condensed, DejaVu Sans, Liberation Sans, sans-serif" font-size="12.5" fill="#fff" font-weight="bold" text-anchor="start" letter-spacing="0.4">8</text>
<text x="86.8" y="592" font-family="DejaVu Sans Condensed, DejaVu Sans, Liberation Sans, sans-serif" font-size="12.5" fill="#fff" font-weight="bold" text-anchor="start" letter-spacing="0.4">9</text>
<text x="54.8" y="664" font-family="DejaVu Sans Condensed, DejaVu Sans, Liberation Sans, sans-serif" font-size="12.5" fill="#fff" font-weight="bold" text-anchor="start" letter-spacing="0.4">10</text>
<text x="46" y="501" font-family="DejaVu Sans Condensed, DejaVu Sans, Liberation Sans, sans-serif" font-size="12" fill="#fff" font-weight="bold" text-anchor="start" >2</text>
<text x="133" y="501" font-family="DejaVu Sans Condensed, DejaVu Sans, Liberation Sans, sans-serif" font-size="12" fill="#fff" font-weight="bold" text-anchor="start" >5</text>
<text x="846" y="200.5" font-family="DejaVu Sans Condensed, DejaVu Sans, Liberation Sans, sans-serif" font-size="11" fill="#fff" font-weight="bold" text-anchor="start" textLength="54" lengthAdjust="spacingAndGlyphs" >на 1 др.с.</text>
<text x="269.5" y="340" font-family="DejaVu Sans Condensed, DejaVu Sans, Liberation Sans, sans-serif" font-size="11" fill="#fff" text-anchor="start" textLength="35.5" lengthAdjust="spacingAndGlyphs"  stroke="#fff" stroke-width="0.35">шн.140</text>
<text x="493.5" y="442" font-family="DejaVu Sans Condensed, DejaVu Sans, Liberation Sans, sans-serif" font-size="11" fill="#fff" text-anchor="start" textLength="35.5" lengthAdjust="spacingAndGlyphs"  stroke="#fff" stroke-width="0.35">шн.140</text>
<text x="229.5" y="325" font-family="DejaVu Sans Condensed, DejaVu Sans, Liberation Sans, sans-serif" font-size="11" fill="#fff" text-anchor="start" textLength="21" lengthAdjust="spacingAndGlyphs"  stroke="#fff" stroke-width="0.35">кг/ч</text>
<text x="856.5" y="392.5" font-family="DejaVu Sans Condensed, DejaVu Sans, Liberation Sans, sans-serif" font-size="11" fill="#fff" text-anchor="start" textLength="21" lengthAdjust="spacingAndGlyphs"  stroke="#fff" stroke-width="0.35">кг/ч</text>
<text x="979.5" y="669" font-family="DejaVu Sans Condensed, DejaVu Sans, Liberation Sans, sans-serif" font-size="11" fill="#fff" text-anchor="start" textLength="31" lengthAdjust="spacingAndGlyphs"  stroke="#fff" stroke-width="0.35">на а/т</text>
<text x="877" y="645" font-family="DejaVu Sans Condensed, DejaVu Sans, Liberation Sans, sans-serif" font-size="10.5" fill="#fff" text-anchor="start" textLength="28.5" lengthAdjust="spacingAndGlyphs"  stroke="#fff" stroke-width="0.35">с 132,</text>
<text x="883.5" y="657.5" font-family="DejaVu Sans Condensed, DejaVu Sans, Liberation Sans, sans-serif" font-size="10.5" fill="#fff" text-anchor="start" textLength="17" lengthAdjust="spacingAndGlyphs"  stroke="#fff" stroke-width="0.35">133</text>
<text x="737" y="305" font-family="DejaVu Sans Condensed, DejaVu Sans, Liberation Sans, sans-serif" font-size="10.5" fill="#fff" text-anchor="start" textLength="16.5" lengthAdjust="spacingAndGlyphs"  stroke="#fff" stroke-width="0.35">139</text>
<text x="221.5" y="288" font-family="DejaVu Sans Condensed, DejaVu Sans, Liberation Sans, sans-serif" font-size="12" fill="#000" font-weight="bold" text-anchor="start" textLength="27.5" lengthAdjust="spacingAndGlyphs" >Стоп</text>
<text x="846" y="358" font-family="DejaVu Sans Condensed, DejaVu Sans, Liberation Sans, sans-serif" font-size="12" fill="#000" font-weight="bold" text-anchor="start" textLength="27.5" lengthAdjust="spacingAndGlyphs" >Стоп</text>
<text x="274.5" y="309.5" font-family="DejaVu Sans Condensed, DejaVu Sans, Liberation Sans, sans-serif" font-size="12" fill="#000" font-weight="bold" text-anchor="end" >0</text>
<text x="895.5" y="377.5" font-family="DejaVu Sans Condensed, DejaVu Sans, Liberation Sans, sans-serif" font-size="12" fill="#000" font-weight="bold" text-anchor="end" >0</text>
<text x="789.5" y="421.5" font-family="DejaVu Sans Condensed, DejaVu Sans, Liberation Sans, sans-serif" font-size="12" fill="#000" font-weight="bold" text-anchor="start" textLength="61.5" lengthAdjust="spacingAndGlyphs" >Стоп весы</text>
<text x="963" y="113" font-family="DejaVu Sans Condensed, DejaVu Sans, Liberation Sans, sans-serif" font-size="12" fill="#000" font-weight="bold" text-anchor="middle" >АС 2</text>
<text x="963" y="225" font-family="DejaVu Sans Condensed, DejaVu Sans, Liberation Sans, sans-serif" font-size="12" fill="#000" font-weight="bold" text-anchor="middle" >АС 1</text>
</svg>
</body></html>
